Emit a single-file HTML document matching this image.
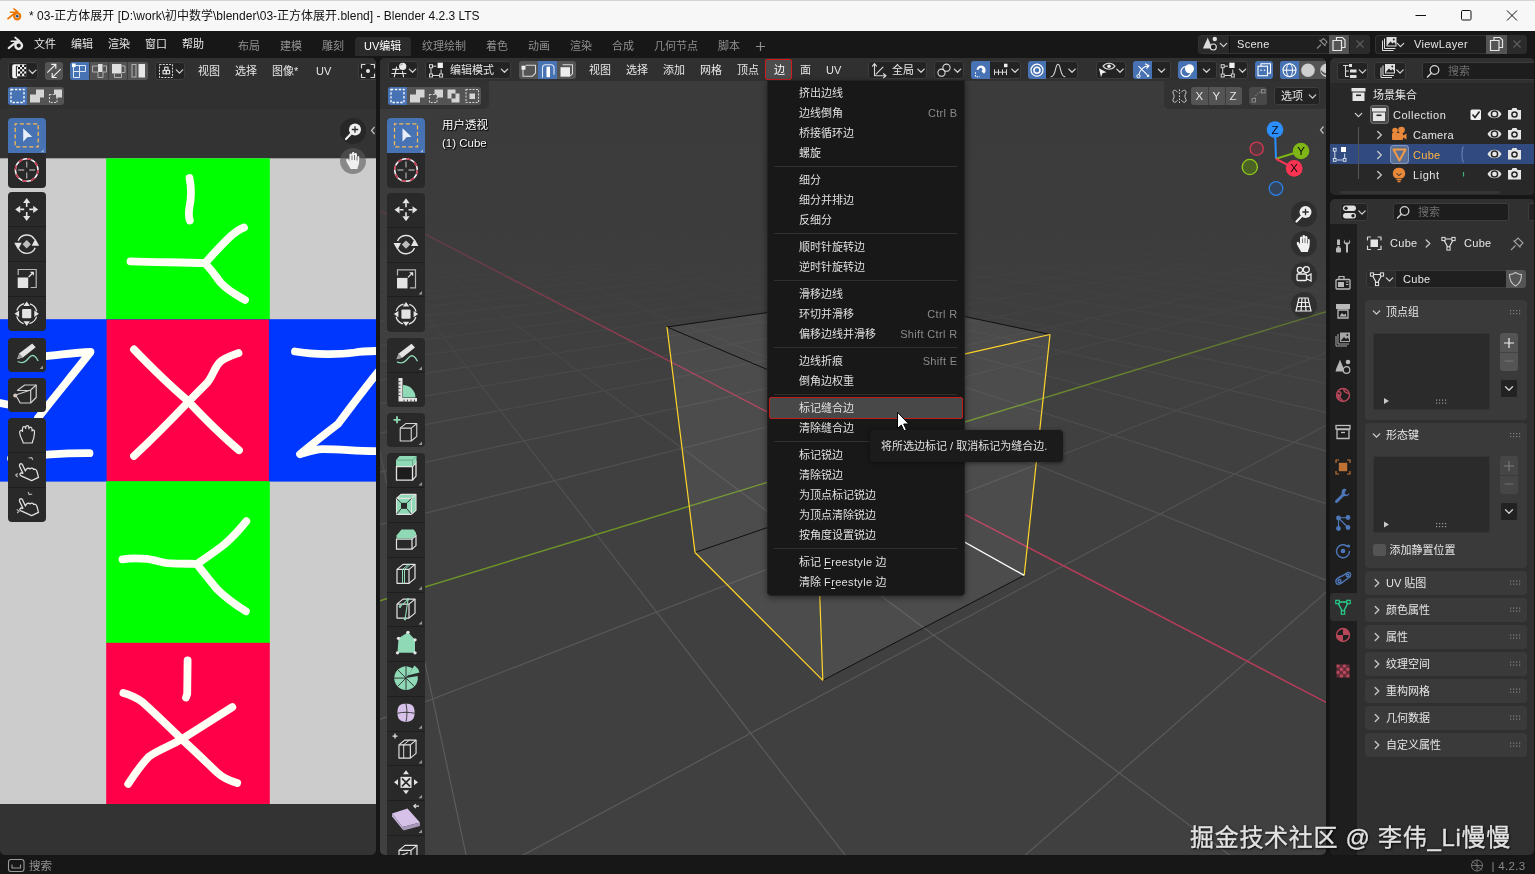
<!DOCTYPE html>
<html lang="zh">
<head>
<meta charset="utf-8">
<title>Blender</title>
<style>

*{box-sizing:border-box;margin:0;padding:0}
html,body{width:1535px;height:874px;overflow:hidden;background:#161616}
body{position:relative;will-change:transform;font-family:"Liberation Sans","Noto Sans CJK SC",sans-serif;font-size:11px;color:#e6e6e6}
.abs{position:absolute}
.t{position:absolute;white-space:nowrap;line-height:16px;height:16px}
.dim{color:#989898}
#titlebar{left:0;top:0;width:1535px;height:31px;background:#f7f7f7;box-shadow:inset 0 1px 0 #d4d4d4}
#titlebar .t{color:#111;font-size:12px}
#topbar{left:0;top:31px;width:1535px;height:27px;background:#171717}
#status{left:0;top:857px;width:1535px;height:17px;background:#171717}
.area{position:absolute;overflow:hidden}
#uv{left:0;top:58px;width:376px;height:797px;background:#333333;border-radius:4px 5px 5px 5px}
#v3d{left:380px;top:58px;width:946px;height:797px;background:linear-gradient(#3b3b3b 0,#3c3c3c 160px,#404040 330px,#404040 100%);border-radius:5px}
#outl{left:1330px;top:58px;width:204px;height:137px;background:#282828;border-radius:5px 4px 4px 5px}
#prop{left:1330px;top:199px;width:204px;height:656px;background:#303030;border-radius:5px 4px 5px 5px}
.hdr{position:absolute;left:0;top:0;width:100%;height:25px;background:#303030}
.b{position:absolute;background:#545454;border-radius:3px;height:18px;top:62px}
.b.dk{background:#232323;box-shadow:inset 0 0 0 1px #3c3c3c}
.lt{letter-spacing:0.3px}
.lt2{letter-spacing:0.35px}
u{text-underline-offset:1.5px}
.b.sel{background:#4772b3}
.area#v3d .b{top:61px}
.tool{position:absolute;width:38px;background:#292929;border-radius:4px}
.tool i{position:absolute;left:0;width:38px;height:1px;background:#1e1e1e}
svg{position:absolute;overflow:visible}
.ic{fill:none;stroke:#d8d8d8;stroke-width:1.2;stroke-linecap:round;stroke-linejoin:round}
.panel{position:absolute;left:34px;width:163px;background:#3a3a3a;border-radius:4px}
.mi{position:absolute;left:32px;white-space:nowrap;line-height:20px;height:20px;color:#e0e0e0}
.sc{position:absolute;right:7px;letter-spacing:0.35px;white-space:nowrap;line-height:20px;height:20px;color:#8a8a8a}
.sep{position:absolute;left:7px;width:183px;height:1px;background:#2f2f2f}

</style>
</head>
<body>
<div id="titlebar" class="abs"><div class="t" style="left:29px;top:8px">* 03-正方体展开 [D:\work\初中数学\blender\03-正方体展开.blend] - Blender 4.2.3 LTS</div><svg style="left:0;top:0" width="1535" height="31" viewBox="0 0 1535 31"><g transform="translate(15 15) scale(0.84)" fill="none" stroke="#ea7600" stroke-linecap="round"><path d="M-8.300 4.300L1 -3.300" stroke-width="2.200"/><path d="M-5.500 -3.200H1.500" stroke-width="1.800"/><path d="M-1.300 -7.300L3.500 -3.500" stroke-width="1.800"/><circle cx="2.600" cy="1.500" r="3.600" stroke-width="2.600" fill="#ffffff"/><circle cx="2.600" cy="1.500" r="1.700" fill="#265787" stroke="none"/></g><path d="M1415.500 15.500H1426" stroke="#111" stroke-width="1"/><rect x="1461.500" y="10.500" width="9.500" height="9.500" rx="1.200" fill="none" stroke="#111" stroke-width="1"/><path d="M1507 10.500L1517 20.500M1517 10.500L1507 20.500" stroke="#111" stroke-width="1"/></svg></div><div id="topbar" class="abs"></div><div id="status" class="abs"></div><div class="t" style="left:34px;top:35.5px;color:#e6e6e6">文件</div><div class="t" style="left:71px;top:35.5px;color:#e6e6e6">编辑</div><div class="t" style="left:108px;top:35.5px;color:#e6e6e6">渲染</div><div class="t" style="left:145px;top:35.5px;color:#e6e6e6">窗口</div><div class="t" style="left:182px;top:35.5px;color:#e6e6e6">帮助</div><div class="abs" style="left:355px;top:36.600px;width:56px;height:19px;background:#2b2b2b;border-radius:4px 4px 0 0"></div><div class="t" style="left:238px;top:38px;color:#8f8f8f">布局</div><div class="t" style="left:280px;top:38px;color:#8f8f8f">建模</div><div class="t" style="left:322px;top:38px;color:#8f8f8f">雕刻</div><div class="t" style="left:364px;top:38px;color:#ffffff">UV编辑</div><div class="t" style="left:422px;top:38px;color:#8f8f8f">纹理绘制</div><div class="t" style="left:486px;top:38px;color:#8f8f8f">着色</div><div class="t" style="left:528px;top:38px;color:#8f8f8f">动画</div><div class="t" style="left:570px;top:38px;color:#8f8f8f">渲染</div><div class="t" style="left:612px;top:38px;color:#8f8f8f">合成</div><div class="t" style="left:654px;top:38px;color:#8f8f8f">几何节点</div><div class="t" style="left:718px;top:38px;color:#8f8f8f">脚本</div><div class="abs" style="left:1198px;top:34.5px;width:172px;height:19px;border-radius:4px;background:#1f1f1f;box-shadow:inset 0 0 0 1px #333"></div><div class="abs" style="left:1199px;top:35.5px;width:30.500px;height:17px;background:#2a2a2a;border-radius:3px 0 0 3px;border-right:1px solid #111"></div><div class="abs" style="left:1376px;top:35.5px;width:30.500px;height:17px;background:#2a2a2a;border-radius:3px 0 0 3px;border-right:1px solid #111"></div><div class="abs" style="left:1328.5px;top:34.5px;width:20.500px;height:19px;background:#545454"></div><div class="abs" style="left:1349.500px;top:34.5px;width:20.500px;height:19px;background:#2b2b2b;border-radius:0 4px 4px 0"></div><div class="t lt" style="left:1237px;top:36px">Scene</div><div class="abs" style="left:1375px;top:34.5px;width:151px;height:19px;border-radius:4px;background:#1f1f1f;box-shadow:inset 0 0 0 1px #333"></div><div class="abs" style="left:1486px;top:34.5px;width:20.500px;height:19px;background:#545454"></div><div class="abs" style="left:1507px;top:34.5px;width:19.500px;height:19px;background:#2b2b2b;border-radius:0 4px 4px 0"></div><div class="t lt" style="left:1414px;top:36px">ViewLayer</div><div class="t" style="left:29px;top:858px;color:#909090;font-size:11.5px">搜索</div><div class="t" style="left:1491.500px;top:857.5px;color:#8a8a8a;font-size:11.5px;letter-spacing:0.3px">| 4.2.3</div><div class="t" style="left:1190px;top:821.5px;height:32px;line-height:32px;font-size:24px;letter-spacing:0.7px;color:#e2e2e2;-webkit-text-stroke:0.35px #e2e2e2;text-shadow:1px 1px 2px rgba(0,0,0,0.75),0 0 3px rgba(0,0,0,0.5);z-index:50">掘金技术社区 @ 李伟_Li慢慢</div><svg style="left:0;top:0;z-index:5" width="1535" height="874" viewBox="0 0 1535 874"><g transform="translate(16.3 44.2) scale(0.92)" fill="none" stroke="#e8e8e8" stroke-linecap="round"><path d="M-8.300 4.300L1 -3.300" stroke-width="2.200"/><path d="M-5.500 -3.200H1.500" stroke-width="1.800"/><path d="M-1.300 -7.300L3.500 -3.500" stroke-width="1.800"/><circle cx="2.600" cy="1.500" r="3.600" stroke-width="2.600" fill="#171717"/></g><path d="M756 46.500H765M760.500 42V51" stroke="#8f8f8f" stroke-width="1.200"/><path d="M1207.700 37.500C1209 41 1211 44.500 1212 48.500H1203C1204.500 44.500 1206.500 41 1207.700 37.500Z" fill="#dcdcdc"/><circle cx="1214.800" cy="39" r="2.200" fill="#e0e0e0"/><circle cx="1213.300" cy="47" r="3" fill="#1f1f1f" stroke="#e0e0e0" stroke-width="1.100"/><path d="M1220.3 43.4L1223.5 46.6L1226.7 43.4" fill="none" stroke="#d0d0d0" stroke-width="1.3" stroke-linecap="round" stroke-linejoin="round"/><path d="M1317 48.500L1321 44.500M1319.500 40L1325.500 46M1320.500 41L1323.500 38.500L1327 42L1324.500 45" fill="none" stroke="#8a8a8a" stroke-width="1.100"/><g transform="translate(1339 44)" fill="none" stroke="#e6e6e6" stroke-width="1.200"><path d="M-2.500 -3.500V-6.500H3.500L6 -4V3.500H2.500"/><path d="M-6 -3.500H2.500V6.500H-6Z"/></g><path d="M1356.5 40.5L1363.5 47.5M1363.5 40.5L1356.5 47.5" stroke="#5e5e5e" stroke-width="1.200"/><g transform="translate(1389.5 44)"><path d="M-7 -3.500V6.500H4M-5 -5.500V4.500H6" fill="none" stroke="#e0e0e0" stroke-width="1"/><rect x="-3" y="-7" width="10" height="9.500" fill="#e0e0e0"/><path d="M-2 1L1 -2.500L3 -0.500L4.500 -2L6 0V1.500H-2Z" fill="#222"/><circle cx="4.300" cy="-4.500" r="1" fill="#222"/></g><path d="M1397.3 43.4L1400.5 46.6L1403.7 43.4" fill="none" stroke="#d0d0d0" stroke-width="1.3" stroke-linecap="round" stroke-linejoin="round"/><g transform="translate(1496.5 44)" fill="none" stroke="#e6e6e6" stroke-width="1.200"><path d="M-2.500 -3.500V-6.500H3.500L6 -4V3.500H2.500"/><path d="M-6 -3.500H2.500V6.500H-6Z"/></g><path d="M1513.5 40.5L1520.5 47.5M1520.5 40.5L1513.5 47.5" stroke="#5e5e5e" stroke-width="1.200"/><rect x="8.500" y="859.500" width="15.500" height="12" rx="2.500" fill="none" stroke="#9a9a9a" stroke-width="1.100"/><path d="M12 864.500V868H20.500V864.500" fill="none" stroke="#9a9a9a" stroke-width="1.100"/><circle cx="1477" cy="865.500" r="5.500" fill="none" stroke="#777" stroke-width="1"/><path d="M1471.500 865.500H1482.500M1477 860V871M1472 860.500L1482 870.500" stroke="#777" stroke-width="0.900" fill="none"/></svg>
<div id="uv" class="area"><div class="abs" style="left:0;top:-58px;width:1535px;height:874px"><div class="abs" style="left:0;top:58px;width:376px;height:51px;background:#303030"></div><svg style="left:0;top:58px" width="376" height="797" viewBox="0 58 376 797"><rect x="0" y="158.3" width="376" height="645.7" fill="#cccccc"/><rect x="106.2" y="158.3" width="163.6" height="161.7" fill="#00ff00"/><rect x="0" y="319.200" width="376" height="162.400" fill="#0037ff"/><rect x="106.600" y="319.500" width="162.300" height="162" fill="#ff0048"/><rect x="106.2" y="481.2" width="163.6" height="161.8" fill="#00ff00"/><rect x="106.2" y="642.8" width="163.6" height="161.2" fill="#ff0048"/><g fill="none" stroke="#fffff6" stroke-width="7.8" stroke-linecap="round" stroke-linejoin="round"><path d="M189.5 178 C192 190 191 200 189.3 208 C188.5 214 189 218 189.8 220.5"/><path d="M130.5 261.4 C160 262.5 185 262 205 263.2"/><path d="M205 263.2 C215 252 224 242 232 235 C237 231 240 229 244 227.5"/><path d="M205 263.5 C212 270 216 277 221 283 C228 291 237 295 245 300"/><path d="M134 349.5 C150 366 168 384 187.5 400.5 C205 419 222 436 239 450.2"/><path d="M238.5 353 C230 356 224 358 220 362 C214 368 213 376 207 383 C199 391 193 397 187.6 402.6 C170 421 150 441 134 456"/><path d="M42 356.5 C60 355 75 352.5 90.5 352 C75 372 55 396 38 418"/><path d="M0 403 L9 404.8"/><path d="M11 458.5 C30 456 60 453 89.5 453.2"/><path d="M295 351.5 C315 355 340 354.5 355 352.5 C362 351 370 351 378 351"/><path d="M378 372 C365 388 350 408 338 424 C325 434 312 444 300 454.2 C308 452 315 449.5 322 449.2 C340 449 360 451.5 378 451"/><path d="M122.5 559.3 C130 558 140 558.2 147 558.8 C155 560 162 562.5 168 563.2 C178 564 188 563.6 197.3 563.8"/><path d="M197.3 563.8 C207 557 216 551 224.5 544.2 C233 537 240 529 246.3 521.2"/><path d="M197.5 565 C204 573 210 581 216.8 588.9 C226 598 236 605 245.9 611.3"/><path d="M187.6 660.4 L187.2 694 L186 697.6"/><path d="M123.4 693 C131 695 137 698 142.8 702.3 C156 714 169 727 181.7 739.2 C194 750 205 761 216.8 772.3 C223 778 230 781 237.2 783"/><path d="M232.3 707.1 C215 718 198 729 181.7 739.2 C170 746 158 750 148.6 756.8 C141 765 134 775 128.2 784"/></g></svg><div class="b dk" style="left:8px;width:30px"></div><div class="b" style="left:45px;width:18px"></div><div class="b" style="left:70px;width:78px"></div><div class="b sel" style="left:70px;width:19px;border-radius:3px 0 0 3px"></div><div class="abs" style="left:89px;top:62px;width:1px;height:18px;background:#3d3d3d"></div><div class="abs" style="left:108px;top:62px;width:1px;height:18px;background:#3d3d3d"></div><div class="abs" style="left:127px;top:62px;width:1px;height:18px;background:#3d3d3d"></div><div class="b dk" style="left:155px;width:30px"></div><div class="b dk" style="left:357.500px;width:24px;top:62.500px;height:17px"></div><div class="t" style="left:198px;top:63px">视图</div><div class="t" style="left:235px;top:63px">选择</div><div class="t" style="left:272px;top:63px">图像*</div><div class="t" style="left:316px;top:63px">UV</div><div class="b" style="left:8px;top:87px;width:56px;height:18px"></div><div class="b sel" style="left:8px;top:87px;width:19px;height:18px;border-radius:3px 0 0 3px"></div><div class="tool" style="left:7.5px;top:118px;height:69.5px"><i style="top:34.25px"></i><div class="abs" style="left:0;top:0.0px;width:38px;height:34.75px;background:#4772b3;border-radius:4px 4px 0 0"></div></div><div class="tool" style="left:7.5px;top:192px;height:139.0px"><i style="top:34.25px"></i><i style="top:69.0px"></i><i style="top:103.75px"></i></div><div class="tool" style="left:7.5px;top:337.5px;height:34.75px"></div><div class="tool" style="left:7.5px;top:377.5px;height:34.75px"></div><div class="tool" style="left:7.5px;top:417.5px;height:104.25px"><i style="top:34.25px"></i><i style="top:69.0px"></i></div><div class="abs" style="left:340px;top:118px;width:26px;height:26px;border-radius:13px;background:rgba(28,28,28,0.5)"></div><div class="abs" style="left:340px;top:148px;width:26px;height:26px;border-radius:13px;background:rgba(90,90,90,0.6)"></div><svg style="left:0;top:0" width="1535" height="874" viewBox="0 0 1535 874"><g transform="translate(26.7 135.3)" ><rect x="-11.5" y="-11.5" width="23" height="23" fill="none" stroke="#f5b955" stroke-width="1.3" stroke-dasharray="4.2 2.4" stroke-dashoffset="2"/><path d="M-3.5 -7 L5.5 1.5 L0.5 2 L-3.5 6.5Z" fill="#e8eef8"/><path d="M17 14 L17 17 L14 17Z" fill="#9db5da"/></g><g transform="translate(26.7 170)" ><circle r="11.3" fill="none" stroke="#f2f2f2" stroke-width="1.5"/><circle r="11.3" fill="none" stroke="#c8324a" stroke-width="1.5" stroke-dasharray="4.4 4.47"/><path d="M-8.5 0H-2.5M2.5 0H8.5M0 -8.5V-2.5M0 2.5V8.5" stroke="#9a9a9a" stroke-width="1.4" fill="none"/></g><g transform="translate(26.7 209.4)" ><path d="M11.5 0.0L6.5 3.6L6.5 -3.6ZM-11.5 0.0L-6.5 -3.6L-6.5 3.6ZM0.0 11.5L-3.6 6.5L3.6 6.5ZM0.0 -11.5L3.6 -6.5L-3.6 -6.5Z" fill="#e4e4e4"/><path d="M-6.5 0H-2.5M2.5 0H6.5M0 -6.5V-2.5M0 2.5V6.5" stroke="#e4e4e4" stroke-width="1.6" fill="none"/></g><g transform="translate(26.7 244.2)" ><path d="M-8.5 -3.5A9.2 9.2 0 0 1 8 -4.5M8.5 3.5A9.2 9.2 0 0 1 -8 4.5" fill="none" stroke="#e4e4e4" stroke-width="1.4"/><path d="M8.6 -5.5L12.5 1.5L5 1.5ZM-8.6 5.5L-12.5 -1.5L-5 -1.5Z" fill="#e4e4e4"/><path d="M0 -4.2L4.2 0L0 4.2L-4.2 0Z" fill="#bdbdbd"/></g><g transform="translate(26.7 279)" ><rect x="-9" y="-1.5" width="10.5" height="10.5" fill="#e4e4e4"/><path d="M-8.5 -4V-9.5H9.5V8.5H4" fill="none" stroke="#b8b8b8" stroke-width="1.2"/><path d="M2 -2L6.5 -6.5" stroke="#e4e4e4" stroke-width="1.3"/><path d="M3.2 -7.2H7.2V-3.2Z" fill="#e4e4e4"/></g><g transform="translate(26.7 313.7)" ><circle r="10.3" fill="none" stroke="#e4e4e4" stroke-width="1.3" stroke-dasharray="10.2 6" stroke-dashoffset="-3"/><rect x="-4.6" y="-4.6" width="9.2" height="9.2" rx="1" fill="#e4e4e4"/><path d="M12.2 0.0L7.6 3.2L7.6 -3.2ZM-12.2 0.0L-7.6 -3.2L-7.6 3.2ZM0.0 12.2L-3.2 7.6L3.2 7.6ZM0.0 -12.2L3.2 -7.6L-3.2 -7.6Z" fill="#e4e4e4"/></g><g transform="translate(26.7 354.5)" ><path d="M-9.5 4.5L-7.3 -1.2L5.5 -11L9 -7.2L-3.8 3Z" fill="#e4e4e4"/><path d="M-9.5 4.5L-7.3 -1.2L-3.8 3Z" fill="#9a9a9a"/><path d="M-9 7C-3 10 0 6 3 2.5C6 -0.5 9 1 11.5 6.5" fill="none" stroke="#8fd9b6" stroke-width="1.3"/></g><path d="M43 365.5V369H39.5Z" fill="#9a9a9a"/><g transform="translate(26.7 394.5)" ><path d="M-9.5 -4L-2 -9.5H9.5V3L4 8.5H-6.5L-11 0.5" fill="none" stroke="#cfcfcf" stroke-width="1.2" stroke-linejoin="round"/><path d="M-11 0.5L4 -4.5V8.5M4 -4.5L9.5 -9.5M-9.5 -4H4" fill="none" stroke="#cfcfcf" stroke-width="1.2" stroke-linejoin="round"/><circle cx="-11.5" cy="1" r="2" fill="#d8c8c0"/></g><g transform="translate(26.7 434.5)" ><path d="M-7 -1.5C-7.5 -4 -5 -5 -4.2 -3V-6C-4 -8.5 -1.2 -8.5 -1 -6V-7C-0.8 -9.5 2 -9.5 2.2 -7V-5.8C2.5 -8 5.2 -8 5.3 -5.5V-3.5C6 -5 8 -4.5 7.8 -2.5C7.5 1 7.5 4 6 6.5C5.5 8.5 5.5 8.5 5.5 8.5H-3.5C-3.5 6 -6.5 3 -7 -1.5Z" fill="none" stroke="#e0e0e0" stroke-width="1.2" stroke-linejoin="round"/></g><g transform="translate(26.7 469.5)" ><path d="M-3 -4.5C-3 -7 0 -7 0 -4.5V1.5C2 -0.5 4 0 4.5 1.5C6.5 1 7.5 2 7.5 3.5C9 3.5 9.8 4.5 9.5 6.5L8.5 12H1.5L-5.5 4C-7 2 -5 0.5 -3 2.5Z" fill="none" stroke="#e0e0e0" stroke-width="1.2" stroke-linejoin="round" transform="translate(-2 0) rotate(-25) scale(1.08)"/><path d="M-9 4L-11 5.5L-9 7.5M2 -11.5L5 -12L6 -9.5" fill="none" stroke="#bdbdbd" stroke-width="1.1"/></g><g transform="translate(26.7 504.5)" ><path d="M-3 -4.5C-3 -7 0 -7 0 -4.5V1.5C2 -0.5 4 0 4.5 1.5C6.5 1 7.5 2 7.5 3.5C9 3.5 9.8 4.5 9.5 6.5L8.5 12H1.5L-5.5 4C-7 2 -5 0.5 -3 2.5Z" fill="none" stroke="#e0e0e0" stroke-width="1.2" stroke-linejoin="round" transform="translate(-2 0) rotate(-25) scale(1.08)"/><path d="M-10 5L-7.5 6.5L-9.5 8.5M1.5 -12.5L2.5 -9.8L5.5 -10.5" fill="none" stroke="#bdbdbd" stroke-width="1.1"/></g><path d="M12.200 66.200A2 2 0 0 1 14.200 64.200H26.200V76.200H17.200V78.200H14.200A2 2 0 0 1 12.200 76.200Z" fill="#f2f2f2"/><path d="M16.400 66.300V76.500" stroke="#232323" stroke-width="1"/><path d="M16 66.300H18" stroke="#232323" stroke-width="0.800"/><rect x="20.05" y="64.80" width="2.050" height="2.200" fill="#111"/><rect x="24.15" y="64.80" width="2.050" height="2.200" fill="#111"/><rect x="18.00" y="67.00" width="2.050" height="2.200" fill="#111"/><rect x="22.10" y="67.00" width="2.050" height="2.200" fill="#111"/><rect x="20.05" y="69.20" width="2.050" height="2.200" fill="#111"/><rect x="24.15" y="69.20" width="2.050" height="2.200" fill="#111"/><rect x="18.00" y="71.40" width="2.050" height="2.200" fill="#111"/><rect x="22.10" y="71.40" width="2.050" height="2.200" fill="#111"/><rect x="20.05" y="73.60" width="2.050" height="2.200" fill="#111"/><rect x="24.15" y="73.60" width="2.050" height="2.200" fill="#111"/><path d="M29.1 70.1L32.5 73.5L35.9 70.1" fill="none" stroke="#d0d0d0" stroke-width="1.3" stroke-linecap="round" stroke-linejoin="round"/><path d="M47.300 72.700L55.500 64.600M51.300 64.300H55.800V68.800M60.700 69.200L52.400 77.300M52.200 73V77.500H56.700" fill="none" stroke="#f0f0f0" stroke-width="1.150"/><rect x="72" y="63.5" width="3.6" height="3.6" fill="#fff"/><path d="M75.5 65.5H85.5V71.5H79.5V77.5H73.5V67M79.5 65.5V71.5H73.5" class="ic" style="stroke:#dfe8f5;stroke-width:1"/><rect x="98" y="64" width="4.5" height="8" fill="#e0e0e0"/><path d="M98 66H92.5V72H98V77.5H103V72M103 66H106.5V72H103" class="ic" style="stroke:#b0b0b0;stroke-width:1"/><rect x="112" y="64" width="9.5" height="9.5" fill="#e0e0e0"/><path d="M122 66H125V72.5H122M114.5 74V77.5H121.5V74" class="ic" style="stroke:#b0b0b0;stroke-width:1"/><rect x="138.5" y="64" width="6.5" height="13.5" fill="#e6e6e6"/><rect x="132" y="64.5" width="4" height="12.5" fill="none" stroke="#b0b0b0" stroke-width="1"/><rect x="159.5" y="64.5" width="13" height="13" fill="none" stroke="#d8d8d8" stroke-width="1" stroke-dasharray="2 1.2"/><rect x="163" y="70.5" width="3.3" height="3.3" fill="none" stroke="#e8e8e8" stroke-width="1.1"/><rect x="166.3" y="70.5" width="3.3" height="3.3" fill="none" stroke="#e8e8e8" stroke-width="1.1"/><rect x="164.7" y="67.2" width="3.3" height="3.3" fill="none" stroke="#e8e8e8" stroke-width="1.1"/><path d="M176.3 69.9L179.5 73.1L182.7 69.9" fill="none" stroke="#d0d0d0" stroke-width="1.3" stroke-linecap="round" stroke-linejoin="round"/><path d="M361.500 68V64.500H365M371 64.500H374.500V68M361.500 74V77.500H365M371 77.500H374.500V74" class="ic"/><circle cx="368" cy="71" r="2" fill="#e8e8e8"/><rect x="11" y="89.5" width="13" height="13" fill="none" stroke="#fff" stroke-width="1.3" stroke-dasharray="2.4 1.5"/><path d="M36 89.5H44V97.5H40V102.5H30V94.5H36Z" fill="#d4d4d4"/><path d="M54 89.5H62V97.5H56V94.5H54Z" fill="#d4d4d4"/><rect x="49.5" y="94.5" width="7.5" height="8" fill="none" stroke="#d0d0d0" stroke-width="1.1" stroke-dasharray="2 1.3"/><circle cx="355" cy="129.500" r="6" fill="#f0f0f0"/><path d="M350.800 134L346 139" stroke="#f0f0f0" stroke-width="2.200" stroke-linecap="round"/><path d="M351.800 129.500H358.200M355 126.300V132.700" stroke="#2a2a2a" stroke-width="1.300"/><g transform="translate(353 161)"><path d="M-6.5 0.5C-7.5 -2 -5.5 -3 -4.5 -1.5L-3.5 0.5V-6C-3.5 -8 -1 -8 -1 -6V-7.5C-1 -9.5 1.5 -9.5 1.5 -7.5V-6.5C1.8 -8.5 4 -8.3 4 -6.3V-4C4.5 -5.5 6.5 -5.3 6.3 -3.3C6.2 0.5 6.3 3.5 4.8 6C4.5 7.5 4.5 8 4.5 8H-2.5C-3 5.5 -5.5 3.5 -6.5 0.5Z" fill="#f0f0f0"/><path d="M-1 -5.5V-1M1.5 -6V-1M4 -4.5V-0.5" stroke="#555" stroke-width="0.8"/></g><path d="M374.5 127L371.5 130.5L374.5 134" fill="none" stroke="#c0c0c0" stroke-width="1.2"/></svg></div></div>
<div id="v3d" class="area"><div class="abs" style="left:-380px;top:-58px;width:1535px;height:874px"><svg style="left:380px;top:58px" width="946" height="797" viewBox="380 58 946 797"><defs><linearGradient id="gf" x1="0" y1="0" x2="0" y2="1" gradientUnits="userSpaceOnUse" ></linearGradient><linearGradient id="fade" gradientUnits="userSpaceOnUse" x1="0" y1="220" x2="0" y2="720"><stop offset="0.000" stop-color="#000000"/><stop offset="0.160" stop-color="#212121"/><stop offset="0.320" stop-color="#545454"/><stop offset="0.480" stop-color="#949494"/><stop offset="0.680" stop-color="#d1d1d1"/><stop offset="1.000" stop-color="#ffffff"/></linearGradient><linearGradient id="fade2" gradientUnits="userSpaceOnUse" x1="0" y1="190" x2="0" y2="430"><stop offset="0.000" stop-color="#333333"/><stop offset="0.292" stop-color="#616161"/><stop offset="0.625" stop-color="#adadad"/><stop offset="1.000" stop-color="#ffffff"/></linearGradient><mask id="gm2" maskUnits="userSpaceOnUse" x="370" y="50" width="970" height="820"><rect x="370" y="50" width="970" height="820" fill="url(#fade2)"/></mask><mask id="gm" maskUnits="userSpaceOnUse" x="370" y="50" width="970" height="820"><rect x="370" y="50" width="970" height="820" fill="url(#fade)"/></mask></defs><g mask="url(#gm)"><g stroke="#5c5c5c" stroke-width="1.15" fill="none"><path d="M370.0 209.7L950.8 190.2"/><path d="M370.0 210.2L956.5 190.2"/><path d="M370.0 210.6L962.3 190.3"/><path d="M370.0 211.1L968.2 190.4"/><path d="M370.0 211.7L974.2 190.5"/><path d="M370.0 212.2L980.4 190.6"/><path d="M370.0 212.7L986.6 190.7"/><path d="M370.0 213.3L993.0 190.8"/><path d="M370.0 213.9L999.5 190.9"/><path d="M370.0 214.5L1006.1 191.0"/><path d="M370.0 215.2L1012.9 191.1"/><path d="M370.0 215.8L1019.8 191.2"/><path d="M370.0 216.5L1026.8 191.3"/><path d="M370.0 217.2L1034.0 191.4"/><path d="M370.0 217.9L1041.3 191.6"/><path d="M370.0 218.7L1048.8 191.7"/><path d="M370.0 219.5L1056.4 191.8"/><path d="M370.0 220.3L1064.2 191.9"/><path d="M370.0 221.2L1072.2 192.0"/><path d="M370.0 222.1L1080.3 192.2"/><path d="M370.0 223.1L1088.6 192.3"/><path d="M370.0 224.1L1097.1 192.4"/><path d="M370.0 225.1L1105.8 192.5"/><path d="M370.0 226.2L1114.7 192.7"/><path d="M370.0 227.3L1123.8 192.8"/><path d="M370.0 228.5L1133.1 193.0"/><path d="M370.0 229.8L1142.6 193.1"/><path d="M370.0 231.1L1152.3 193.3"/><path d="M370.0 232.5L1162.3 193.4"/><path d="M370.0 234.0L1172.5 193.6"/><path d="M370.0 235.6L1183.0 193.7"/><path d="M370.0 237.3L1193.7 193.9"/><path d="M370.0 239.0L1204.7 194.1"/><path d="M370.0 240.9L1216.0 194.2"/><path d="M370.0 242.9L1227.6 194.4"/><path d="M370.0 245.0L1239.5 194.6"/><path d="M370.0 247.3L1251.6 194.8"/><path d="M370.0 249.8L1264.2 195.0"/><path d="M370.0 252.4L1277.0 195.2"/><path d="M370.0 255.2L1290.3 195.4"/><path d="M370.0 258.3L1303.8 195.6"/><path d="M370.0 261.6L1317.8 195.8"/><path d="M370.0 265.3L1332.2 196.0"/><path d="M370.0 269.2L1336.0 197.1"/><path d="M370.0 273.6L1336.0 198.5"/><path d="M370.0 278.4L1336.0 200.1"/><path d="M370.0 283.7L1336.0 201.9"/><path d="M370.0 289.6L1336.0 203.9"/><path d="M370.0 296.3L1336.0 206.1"/><path d="M370.0 303.7L1336.0 208.6"/><path d="M370.0 312.3L1336.0 211.4"/><path d="M370.0 322.0L1336.0 214.7"/><path d="M370.0 333.4L1336.0 218.5"/><path d="M370.0 346.7L1336.0 222.9"/><path d="M370.0 362.5L1336.0 228.2"/><path d="M370.0 381.6L1336.0 234.6"/><path d="M370.0 405.3L1336.0 242.5"/><path d="M370.0 435.1L1336.0 252.5"/><path d="M370.0 405.5L468.2 865.0"/><path d="M370.0 474.2L1336.0 265.5"/><path d="M370.0 242.5L852.8 865.0"/><path d="M370.0 527.2L1336.0 283.2"/><path d="M370.0 216.2L1243.1 865.0"/><path d="M370.0 723.3L1336.0 348.6"/><path d="M393.3 208.9L1336.0 584.2"/><path d="M504.5 865.0L1336.0 419.9"/><path d="M408.7 208.4L1336.0 506.8"/><path d="M1013.9 865.0L1336.0 583.6"/><path d="M423.7 207.9L1336.0 453.6"/><path d="M438.4 207.4L1336.0 414.8"/><path d="M452.8 206.9L1336.0 385.3"/><path d="M466.9 206.4L1336.0 362.1"/><path d="M480.7 206.0L1336.0 343.3"/><path d="M494.2 205.5L1336.0 327.8"/><path d="M507.5 205.1L1336.0 314.9"/><path d="M520.5 204.6L1336.0 303.8"/><path d="M533.2 204.2L1336.0 294.3"/><path d="M545.7 203.8L1336.0 286.1"/><path d="M558.0 203.4L1336.0 278.8"/><path d="M570.0 203.0L1336.0 272.4"/><path d="M581.8 202.6L1336.0 266.7"/><path d="M593.3 202.2L1336.0 261.6"/><path d="M604.7 201.8L1336.0 256.9"/><path d="M615.8 201.4L1336.0 252.7"/><path d="M626.8 201.0L1336.0 248.9"/><path d="M637.5 200.7L1336.0 245.4"/><path d="M648.1 200.3L1336.0 242.2"/><path d="M658.5 200.0L1336.0 239.3"/><path d="M668.7 199.6L1336.0 236.5"/><path d="M678.7 199.3L1336.0 234.0"/><path d="M688.5 199.0L1336.0 231.7"/><path d="M698.2 198.6L1336.0 229.5"/><path d="M707.7 198.3L1336.0 227.4"/><path d="M717.0 198.0L1336.0 225.5"/><path d="M726.2 197.7L1336.0 223.7"/><path d="M735.3 197.4L1336.0 222.0"/><path d="M744.2 197.1L1336.0 220.4"/><path d="M752.9 196.8L1336.0 218.9"/><path d="M761.5 196.5L1336.0 217.5"/><path d="M770.0 196.2L1336.0 216.2"/><path d="M778.3 196.0L1336.0 214.9"/><path d="M786.5 195.7L1336.0 213.7"/><path d="M794.6 195.4L1336.0 212.5"/><path d="M802.5 195.1L1336.0 211.4"/><path d="M810.4 194.9L1336.0 210.4"/><path d="M818.1 194.6L1336.0 209.4"/><path d="M825.7 194.4L1336.0 208.4"/><path d="M833.1 194.1L1336.0 207.5"/><path d="M840.5 193.9L1336.0 206.7"/><path d="M847.8 193.6L1336.0 205.8"/><path d="M854.9 193.4L1336.0 205.0"/><path d="M862.0 193.1L1336.0 204.3"/><path d="M868.9 192.9L1336.0 203.5"/><path d="M875.7 192.7L1336.0 202.8"/><path d="M882.5 192.5L1336.0 202.1"/><path d="M889.1 192.2L1336.0 201.5"/><path d="M895.7 192.0L1336.0 200.9"/><path d="M902.2 191.8L1336.0 200.3"/><path d="M908.5 191.6L1336.0 199.7"/><path d="M914.8 191.4L1336.0 199.1"/><path d="M921.0 191.2L1336.0 198.6"/><path d="M927.1 191.0L1336.0 198.0"/><path d="M933.2 190.8L1336.0 197.5"/><path d="M939.1 190.6L1336.0 197.0"/><path d="M945.0 190.4L1336.0 196.6"/><path d="M950.8 190.2L1336.0 196.1"/></g></g><g mask="url(#gm2)"><path d="M377.6 209.4L1336.0 707.4" stroke="#b63c5a" stroke-width="1.4"/><path d="M370.0 603.7L1336.0 308.7" stroke="#6f9428" stroke-width="1.4"/></g><path d="M667.0 327.0L812.3 388.6L1050.0 334.5L873.5 297.3Z" fill="#ffffff" fill-opacity="0.035"/><path d="M695.0 552.5L822.8 680.4L1024.2 575.4L873.4 491.0Z" fill="#ffffff" fill-opacity="0.035"/><path d="M667.0 327.0L812.3 388.6L822.8 680.4L695.0 552.5Z" fill="#ffffff" fill-opacity="0.035"/><path d="M873.5 297.3L1050.0 334.5L1024.2 575.4L873.4 491.0Z" fill="#ffffff" fill-opacity="0.035"/><path d="M667.0 327.0L873.5 297.3L873.4 491.0L695.0 552.5Z" fill="#ffffff" fill-opacity="0.035"/><path d="M812.3 388.6L1050.0 334.5L1024.2 575.4L822.8 680.4Z" fill="#ffffff" fill-opacity="0.035"/><path d="M667.0 327.0L812.3 388.6" stroke="#101010" stroke-width="1.0" fill="none"/><path d="M667.0 327.0L873.5 297.3" stroke="#101010" stroke-width="1.0" fill="none"/><path d="M1050.0 334.5L873.5 297.3" stroke="#101010" stroke-width="1.0" fill="none"/><path d="M873.5 297.3L873.4 491.0" stroke="#101010" stroke-width="1.0" fill="none"/><path d="M695.0 552.5L873.4 491.0" stroke="#101010" stroke-width="1.0" fill="none"/><path d="M822.8 680.4L1024.2 575.4" stroke="#101010" stroke-width="1.0" fill="none"/><path d="M667.0 327.0L695.0 552.5" stroke="#ffd52b" stroke-width="1.2" fill="none"/><path d="M695.0 552.5L822.8 680.4" stroke="#ffd52b" stroke-width="1.2" fill="none"/><path d="M822.8 680.4L812.3 388.6" stroke="#ffd52b" stroke-width="1.2" fill="none"/><path d="M812.3 388.6L1050.0 334.5" stroke="#ffd52b" stroke-width="1.2" fill="none"/><path d="M1050.0 334.5L1024.2 575.4" stroke="#ffd52b" stroke-width="1.2" fill="none"/><path d="M1024.2 575.4L873.4 491.0" stroke="#ffffff" stroke-width="1.3" fill="none"/></svg><div class="abs" style="left:380px;top:58px;width:946px;height:22.500px;background:#303030"></div><div class="abs" style="left:380px;top:80.5px;width:108.500px;height:28px;background:#323232;border-radius:0 0 5px 0"></div><div class="abs" style="left:1164px;top:80.5px;width:162px;height:28px;background:#323232;border-radius:0 0 0 5px"></div><div class="b dk" style="left:388px;width:30px"></div><div class="b dk" style="left:425px;width:86px"></div><div class="t" style="left:450px;top:61.5px">编辑模式</div><div class="b" style="left:519px;width:57px"></div><div class="b sel" style="left:538px;width:19px;border-radius:0"></div><div class="t" style="left:589px;top:61.5px">视图</div><div class="t" style="left:626px;top:61.5px">选择</div><div class="t" style="left:663px;top:61.5px">添加</div><div class="t" style="left:700px;top:61.5px">网格</div><div class="t" style="left:737px;top:61.5px">顶点</div><div class="t" style="left:800px;top:61.5px">面</div><div class="t" style="left:826px;top:61.5px">UV</div><div class="abs" style="left:764.500px;top:58.8px;width:27.500px;height:21.200px;background:#4d4d4d;border:1.5px solid #d01c1c;border-radius:2px"></div><div class="t" style="left:774px;top:61.5px;color:#fff">边</div><div class="b dk" style="left:868px;width:59px"></div><div class="t" style="left:892px;top:61.5px">全局</div><div class="b dk" style="left:934px;width:30px"></div><div class="b dk" style="left:971px;width:50px"></div><div class="b sel" style="left:971px;width:19px;border-radius:3px 0 0 3px"></div><div class="b dk" style="left:1028px;width:50px"></div><div class="b sel" style="left:1028px;width:18px;border-radius:3px 0 0 3px"></div><div class="b dk" style="left:1096px;width:30px"></div><div class="b dk" style="left:1133px;width:38px"></div><div class="b sel" style="left:1133px;width:19px;border-radius:3px 0 0 3px"></div><div class="b dk" style="left:1178px;width:39px"></div><div class="b sel" style="left:1178px;width:19px;border-radius:3px 0 0 3px"></div><div class="b dk" style="left:1219px;width:29px"></div><div class="b sel" style="left:1255px;width:18px"></div><div class="b" style="left:1280px;width:60px"></div><div class="b sel" style="left:1280px;width:19px;border-radius:3px 0 0 3px"></div><div class="b" style="left:388px;top:87px;width:93px;height:18px"></div><div class="b sel" style="left:388px;top:87px;width:19px;height:18px;border-radius:3px 0 0 3px"></div><div class="b" style="left:1191px;top:87px;width:51px;height:18px"></div><div class="t" style="left:1195.5px;top:88px;font-size:11.5px">X</div><div class="t" style="left:1212.5px;top:88px;font-size:11.5px">Y</div><div class="t" style="left:1229.5px;top:88px;font-size:11.5px">Z</div><div class="abs" style="left:1208px;top:87px;width:1px;height:18px;background:#3d3d3d"></div><div class="abs" style="left:1225px;top:87px;width:1px;height:18px;background:#3d3d3d"></div><div class="b" style="left:1249px;top:87px;width:18px;height:18px;background:#484848"></div><div class="b dk" style="left:1274px;top:87px;width:46px;height:18px"></div><div class="t" style="left:1281px;top:88px">选项</div><div class="t" style="left:442px;top:117px;color:#fff;font-size:11.5px;text-shadow:0 0 2px #000,1px 1px 1px #000">用户透视</div><div class="t" style="left:442px;top:135px;color:#fff;font-size:11.5px;text-shadow:0 0 2px #000,1px 1px 1px #000">(1) Cube</div><div class="tool" style="left:387px;top:118px;height:69.5px"><i style="top:34.25px"></i><div class="abs" style="left:0;top:0.0px;width:38px;height:34.75px;background:#4772b3;border-radius:4px 4px 0 0"></div></div><div class="tool" style="left:387px;top:192.5px;height:139.0px"><i style="top:34.25px"></i><i style="top:69.0px"></i><i style="top:103.75px"></i></div><div class="tool" style="left:387px;top:337.5px;height:69.5px"><i style="top:34.25px"></i></div><div class="tool" style="left:387px;top:412.5px;height:34.75px"></div><div class="tool" style="left:387px;top:453px;height:417.0px"><i style="top:34.25px"></i><i style="top:69.0px"></i><i style="top:103.75px"></i><i style="top:138.5px"></i><i style="top:173.25px"></i><i style="top:208.0px"></i><i style="top:242.75px"></i><i style="top:277.5px"></i><i style="top:312.25px"></i><i style="top:347.0px"></i><i style="top:381.75px"></i></div><div class="abs" style="left:1290.5px;top:201px;width:26px;height:26px;border-radius:13px;background:rgba(28,28,28,0.42)"></div><div class="abs" style="left:1290.5px;top:231px;width:26px;height:26px;border-radius:13px;background:rgba(28,28,28,0.42)"></div><div class="abs" style="left:1290.5px;top:261.5px;width:26px;height:26px;border-radius:13px;background:rgba(28,28,28,0.42)"></div><div class="abs" style="left:1290.5px;top:291.5px;width:26px;height:26px;border-radius:13px;background:rgba(28,28,28,0.42)"></div><svg style="left:0;top:0" width="1535" height="874" viewBox="0 0 1535 874"><g transform="translate(406 135.3)" ><rect x="-11.5" y="-11.5" width="23" height="23" fill="none" stroke="#f5b955" stroke-width="1.3" stroke-dasharray="4.2 2.4" stroke-dashoffset="2"/><path d="M-3.5 -7 L5.5 1.5 L0.5 2 L-3.5 6.5Z" fill="#e8eef8"/><path d="M17 14 L17 17 L14 17Z" fill="#9db5da"/></g><g transform="translate(406 170)" ><circle r="11.3" fill="none" stroke="#f2f2f2" stroke-width="1.5"/><circle r="11.3" fill="none" stroke="#c8324a" stroke-width="1.5" stroke-dasharray="4.4 4.47"/><path d="M-8.5 0H-2.5M2.5 0H8.5M0 -8.5V-2.5M0 2.5V8.5" stroke="#9a9a9a" stroke-width="1.4" fill="none"/></g><g transform="translate(406 209.8)" ><path d="M11.5 0.0L6.5 3.6L6.5 -3.6ZM-11.5 0.0L-6.5 -3.6L-6.5 3.6ZM0.0 11.5L-3.6 6.5L3.6 6.5ZM0.0 -11.5L3.6 -6.5L-3.6 -6.5Z" fill="#e4e4e4"/><path d="M-6.5 0H-2.5M2.5 0H6.5M0 -6.5V-2.5M0 2.5V6.5" stroke="#e4e4e4" stroke-width="1.6" fill="none"/></g><g transform="translate(406 244.6)" ><path d="M-8.5 -3.5A9.2 9.2 0 0 1 8 -4.5M8.5 3.5A9.2 9.2 0 0 1 -8 4.5" fill="none" stroke="#e4e4e4" stroke-width="1.4"/><path d="M8.6 -5.5L12.5 1.5L5 1.5ZM-8.6 5.5L-12.5 -1.5L-5 -1.5Z" fill="#e4e4e4"/><path d="M0 -4.2L4.2 0L0 4.2L-4.2 0Z" fill="#bdbdbd"/></g><g transform="translate(406 279.4)" ><rect x="-9" y="-1.5" width="10.5" height="10.5" fill="#e4e4e4"/><path d="M-8.5 -4V-9.5H9.5V8.5H4" fill="none" stroke="#b8b8b8" stroke-width="1.2"/><path d="M2 -2L6.5 -6.5" stroke="#e4e4e4" stroke-width="1.3"/><path d="M3.2 -7.2H7.2V-3.2Z" fill="#e4e4e4"/></g><path d="M422 291.0V294.5H418.5Z" fill="#9a9a9a"/><g transform="translate(406 314.1)" ><circle r="10.3" fill="none" stroke="#e4e4e4" stroke-width="1.3" stroke-dasharray="10.2 6" stroke-dashoffset="-3"/><rect x="-4.6" y="-4.6" width="9.2" height="9.2" rx="1" fill="#e4e4e4"/><path d="M12.2 0.0L7.6 3.2L7.6 -3.2ZM-12.2 0.0L-7.6 -3.2L-7.6 3.2ZM0.0 12.2L-3.2 7.6L3.2 7.6ZM0.0 -12.2L3.2 -7.6L-3.2 -7.6Z" fill="#e4e4e4"/></g><g transform="translate(406 354.8)" ><path d="M-9.5 4.5L-7.3 -1.2L5.5 -11L9 -7.2L-3.8 3Z" fill="#e4e4e4"/><path d="M-9.5 4.5L-7.3 -1.2L-3.8 3Z" fill="#9a9a9a"/><path d="M-9 7C-3 10 0 6 3 2.5C6 -0.5 9 1 11.5 6.5" fill="none" stroke="#8fd9b6" stroke-width="1.3"/></g><path d="M422 366.5V370H418.5Z" fill="#9a9a9a"/><g transform="translate(406 389.6)" ><path d="M-7.5 -11.5H-3.5V8.5H11V12H-7.5Z" fill="#e4e4e4"/><path d="M-3 8V-4.5A12.5 12.5 0 0 1 9.5 8Z" fill="#8fd9b6"/><path d="M-7.5 -8H-5.5M-7.5 -4.5H-5.5M-7.5 -1H-5.5M-7.5 2.5H-5.5M-7.5 6H-5.5M-2 12V10M1.5 12V10M5 12V10M8.5 12V10" stroke="#333" stroke-width="0.9"/></g><g transform="translate(406 429.8)" ><g transform="translate(2.5 2.5) scale(0.92)"><path d="M-9 -4.5L-3 -9.5H9V4.5L3 9.5H-9Z" fill="none" stroke="#d8d8d8" stroke-width="1.2" stroke-linejoin="round"/><path d="M-9 -4.5H3V9.5M3 -4.5L9 -9.5" fill="none" stroke="#d8d8d8" stroke-width="1.2" stroke-linejoin="round"/></g><path d="M-12.5 -10H-5.5M-9 -13.5V-6.5" stroke="#8fd9b6" stroke-width="1.8" fill="none"/></g><path d="M422 441.5V445H418.5Z" fill="#9a9a9a"/><g transform="translate(406 468.1)" ><path d="M-9.5 -1.5H6.5V12H-9.5Z" fill="#1d1d1d" stroke="#e4e4e4" stroke-width="1.3"/><path d="M6.5 -1.5L10 -5.5V8L6.500 12" fill="none" stroke="#e4e4e4" stroke-width="1.3"/><path d="M-10 -2V-8L-6.500 -12H10.500V-6L6.500 -2Z" fill="#8fd9b6"/><path d="M-10 -8H6.500V-2M6.500 -8L10.500 -12" stroke="#5d9c80" stroke-width="0.8" fill="none"/></g><path d="M422 482.0V485.5H418.5Z" fill="#9a9a9a"/><g transform="translate(406 504.35)" ><path d="M-9.5 -6L-5 -10H10V6L5.5 10H-9.5Z" fill="#8fd9b6" stroke="#e4e4e4" stroke-width="1.1" stroke-linejoin="round"/><path d="M-9.5 -6H5.5V10M5.5 -6L10 -10" fill="none" stroke="#e4e4e4" stroke-width="1.1"/><rect x="-5" y="-1.5" width="6" height="6" fill="#2a2a2a"/><path d="M-9.5 -6L-5 -1.5M5.5 -6L1 -1.5M-9.5 10L-5 4.5M5.5 10L1 4.5" stroke="#2a2a2a" stroke-width="0.9"/></g><g transform="translate(406 539.1)" ><path d="M-9.5 0H6V10H-9.5Z" fill="none" stroke="#e4e4e4" stroke-width="1.2"/><path d="M6 0L10 -3.5V6.5L6 10" fill="none" stroke="#e4e4e4" stroke-width="1.2"/><path d="M-9.5 -0.6V-3.5L-4.5 -9.5H7.5L10 -6.5V-4.2L6 -0.6Z" fill="#8fd9b6"/></g><g transform="translate(406 573.85)" ><path d="M-9 -4.5L-3 -9.5H9V4.5L3 9.5H-9Z" fill="none" stroke="#e4e4e4" stroke-width="1.2" stroke-linejoin="round"/><path d="M-9 -4.5H3V9.5M3 -4.5L9 -9.5" fill="none" stroke="#e4e4e4" stroke-width="1.2" stroke-linejoin="round"/><path d="M-3.5 -4.5V9.5M-3.5 -4.5L2.5 -9.5M-1.5 -4.5V9.5M-1.5 -4.5L4.5 -9.5" stroke="#8fd9b6" stroke-width="1" fill="none"/></g><path d="M422 586.25V589.75H418.5Z" fill="#9a9a9a"/><g transform="translate(406 608.6)" ><path d="M-9 -4.5L-3 -9.5H9V4.5L3 9.5H-9Z" fill="none" stroke="#e4e4e4" stroke-width="1.2" stroke-linejoin="round"/><path d="M-9 -4.5H3V9.5M3 -4.5L9 -9.5" fill="none" stroke="#e4e4e4" stroke-width="1.2" stroke-linejoin="round"/><path d="M-6 -2L2 -9L-1 11" stroke="#8fd9b6" stroke-width="1.1" fill="none"/><circle cx="-6" cy="-2" r="1.3" fill="#8fd9b6"/><circle cx="2" cy="-9.3" r="1.3" fill="#8fd9b6"/><circle cx="-1" cy="10.5" r="1.3" fill="#8fd9b6"/></g><path d="M422 621.0V624.5H418.5Z" fill="#9a9a9a"/><g transform="translate(406 643.35)" ><path d="M-8.5 9.5L-7.5 -5L2 -11L9 -3.5V9.5Z" fill="#8fd9b6"/><circle cx="-8.5" cy="9.5" r="1.7" fill="#e4e4e4"/><circle cx="-7.5" cy="-5" r="1.7" fill="#e4e4e4"/><circle cx="2" cy="-11" r="1.7" fill="#e4e4e4"/><circle cx="9" cy="-3.5" r="1.7" fill="#e4e4e4"/><circle cx="9" cy="9.5" r="1.7" fill="#e4e4e4"/></g><g transform="translate(406 678.1)" ><path d="M0 0L6.5 -9.8A11.8 11.8 0 1 0 11.6 -2.2Z" fill="#8fd9b6"/><path d="M1.5 -2.5L8.5 -12.5A12 12 0 0 1 13.5 -5.5Z" fill="#8fd9b6"/><path d="M0 0L-11.8 0M0 0L-8.3 8.3M0 0L0 11.8M0 0L8.3 8.3M0 0L-8.3 -8.3M0 0L0 -11.8" stroke="#2a2a2a" stroke-width="0.9"/></g><g transform="translate(406 712.85)" ><g transform="scale(0.86)"><path d="M-10 0C-10 -9 -6 -10.5 0 -10.5C6 -10.5 10 -9 10 0C10 8 6 10.5 0 10.5C-6 10.5 -10 8 -10 0Z" fill="#d6c1e8"/><path d="M-10 0.5C-4 -1 4 -1 10 0.5M0 -10.5C1.5 -4 1.5 4 0 10.5" stroke="#2a2a2a" stroke-width="1" fill="none"/></g></g><path d="M422 725.25V728.75H418.5Z" fill="#9a9a9a"/><g transform="translate(406 747.6)" ><g transform="translate(1.5 1.5) scale(0.95)"><path d="M-9 -4.5L-3 -9.5H9V4.5L3 9.5H-9Z" fill="none" stroke="#e4e4e4" stroke-width="1.2" stroke-linejoin="round"/><path d="M-9 -4.5H3V9.5M3 -4.5L9 -9.5" fill="none" stroke="#e4e4e4" stroke-width="1.2" stroke-linejoin="round"/><path d="M-4 -4.5V9.5M-4 -4.5L2 -9.5" stroke="#e4e4e4" stroke-width="1" fill="none"/></g><path d="M-11 -14V-9M-13.5 -11.5H-8.5" stroke="#e4e4e4" stroke-width="1.3"/></g><path d="M422 760.0V763.5H418.5Z" fill="#9a9a9a"/><g transform="translate(406 782.35)" ><path d="M12.0 0.0L8.0 3.0L8.0 -3.0ZM-12.0 0.0L-8.0 -3.0L-8.0 3.0ZM0.0 12.0L-3.0 8.0L3.0 8.0ZM0.0 -12.0L3.0 -8.0L-3.0 -8.0Z" fill="#e4e4e4"/><rect x="-5.5" y="-5.5" width="11" height="11" fill="#e4e4e4"/><path d="M-4 -4L4 4M4 -4L-4 4" stroke="#2a2a2a" stroke-width="1.6"/></g><path d="M422 794.75V798.25H418.5Z" fill="#9a9a9a"/><g transform="translate(406 817.1)" ><path d="M-14 -3.5L1.500 -8.500L14 5.500L-3.500 10Z" fill="#d6c1e8"/><path d="M14 5.500V9L-2.500 13.500L-3.500 10Z" fill="#a898b8"/><path d="M-14 -3.500L-3.500 10L-2.500 13.500L-14 -0.500Z" fill="#c3b0d6"/><path d="M7.500 -11H13M7.500 -11L10 -13M7.500 -11L10 -9" stroke="#e4e4e4" stroke-width="1.1" fill="none"/></g><path d="M422 829.5V833.0H418.5Z" fill="#9a9a9a"/><g transform="translate(406 851.85)" ><g transform="translate(2 3)"><path d="M-9 -4.5L-3 -9.5H9V4.5L3 9.5H-9Z" fill="none" stroke="#e4e4e4" stroke-width="1.2" stroke-linejoin="round"/><path d="M-9 -4.5H3V9.5M3 -4.5L9 -9.5" fill="none" stroke="#e4e4e4" stroke-width="1.2" stroke-linejoin="round"/></g><path d="M-12 6L2 1" stroke="#e4e4e4" stroke-width="1.1"/></g><path d="M422 864.25V867.75H418.5Z" fill="#9a9a9a"/><path d="M1276 158.8L1275 129.5" stroke="#2c8fff" stroke-width="2"/><path d="M1276 158.8L1301 151" stroke="#7fb515" stroke-width="2"/><path d="M1276 158.8L1294.2 168.4" stroke="#ff3352" stroke-width="2"/><circle cx="1256.7" cy="148.7" r="6.6" fill="#6a3540" fill-opacity="0.6" stroke="#d03a52" stroke-width="1.3"/><circle cx="1249.8" cy="167" r="7.6" fill="#4f6a22" fill-opacity="0.85" stroke="#8cc81a" stroke-width="1.4"/><circle cx="1276" cy="188.5" r="6.8" fill="#2d4a70" fill-opacity="0.6" stroke="#2c7fe0" stroke-width="1.3"/><circle cx="1275" cy="129.5" r="8.3" fill="#2c8fff"/><circle cx="1301" cy="151" r="8.3" fill="#7fb515"/><circle cx="1294.2" cy="168.4" r="8.3" fill="#ff3352"/><g font-family="Liberation Sans,sans-serif" font-size="11.5" fill="#0a0a0a" text-anchor="middle"><text x="1275" y="133.5">Z</text><text x="1301" y="155">Y</text><text x="1294.2" y="172.4">X</text></g><circle cx="1305.500" cy="212" r="6" fill="#f0f0f0"/><path d="M1301.300 216.500L1296.500 221.500" stroke="#f0f0f0" stroke-width="2.200" stroke-linecap="round"/><path d="M1302.300 212H1308.700M1305.500 208.800V215.200" stroke="#2a2a2a" stroke-width="1.300"/><g transform="translate(1303.5 244)"><path d="M-6.5 0.5C-7.5 -2 -5.5 -3 -4.5 -1.5L-3.5 0.5V-6C-3.5 -8 -1 -8 -1 -6V-7.5C-1 -9.5 1.5 -9.5 1.5 -7.5V-6.5C1.8 -8.5 4 -8.3 4 -6.3V-4C4.5 -5.5 6.5 -5.3 6.3 -3.3C6.2 0.5 6.3 3.5 4.8 6C4.5 7.5 4.5 8 4.5 8H-2.5C-3 5.5 -5.5 3.5 -6.5 0.5Z" fill="#f0f0f0"/><path d="M-1 -5.5V-1M1.5 -6V-1M4 -4.5V-0.5" stroke="#555" stroke-width="0.8"/></g><g transform="translate(1303.5 274.5)" fill="none" stroke="#f0f0f0" stroke-width="1.3"><circle cx="-3.5" cy="-4.5" r="2.6"/><circle cx="2.8" cy="-4.8" r="3"/><rect x="-6.5" y="-0.5" width="9.5" height="6.5" rx="1"/><path d="M3.5 1.5L7.5 -0.5V6.5L3.5 4.5"/></g><g transform="translate(1303.5 304.5)" fill="none" stroke="#f0f0f0" stroke-width="1.2"><path d="M-4.5 -6.5H4.5L7.5 6.5H-7.5ZM-5.8 -2H5.8M-6.7 2H6.7M-1.5 -6.5L-2.5 6.5M1.5 -6.5L2.5 6.5"/></g><path d="M1323.5 126.5L1320.5 130L1323.5 133.5" fill="none" stroke="#c0c0c0" stroke-width="1.2"/><g transform="translate(0 -0.8)"><path d="M392.700 70.200H398.800M391.800 74.300H406M396.600 67.800L394.300 77.600M402.400 72L403.600 77.600" fill="none" stroke="#e4e4e4" stroke-width="1.100" stroke-linecap="round"/><circle cx="402.700" cy="67.200" r="3.600" fill="#ececec"/><path d="M400.600 66.300A2.300 2.300 0 0 1 402.600 64.700" fill="none" stroke="#555" stroke-width="0.700"/><path d="M409.3 69.9L412.5 73.1L415.7 69.9" fill="none" stroke="#d0d0d0" stroke-width="1.3" stroke-linecap="round" stroke-linejoin="round"/><g fill="none" stroke="#d8d8d8" stroke-width="1"><path d="M431.0 68.8V74.6M432.8 76.3H439.3M441.1 74.6V70.3M432.8 67.0H436.3"/><rect x="429.5" y="65.5" width="3" height="3"/><rect x="429.5" y="74.8" width="3" height="3"/><rect x="439.6" y="74.8" width="3" height="3"/></g><rect x="437.6" y="63.5" width="5.300" height="5.300" fill="#f2f2f2"/><path d="M501.3 69.9L504.5 73.1L507.7 69.9" fill="none" stroke="#d0d0d0" stroke-width="1.3" stroke-linecap="round" stroke-linejoin="round"/><path d="M526 66H535.5V74L532.5 77H523V69" class="ic" style="stroke-width:1.1"/><rect x="521.5" y="66.5" width="4" height="4" fill="#f0f0f0"/><path d="M542.5 78V68.5A3 3 0 0 1 545.5 65.5H551.5A3 3 0 0 1 554 68.5V75" class="ic" style="stroke:#dfe8f5;stroke-width:1.1"/><rect x="546.5" y="67.500" width="3.5" height="10.5" fill="#fff"/><path d="M563 65.5H572.5V74.500L570.5 76.500" class="ic" style="stroke-width:1.1"/><rect x="560.5" y="68" width="9.5" height="9.5" fill="#ececec"/><path d="M874.5 64.5V76.500H886M872.5 67L874.5 64.5L876.5 67M883.5 74.500L886 76.500L883.5 78.500M876 75L883 68" class="ic" style="stroke-width:1.1"/><path d="M917.8 69.9L921 73.1L924.2 69.9" fill="none" stroke="#d0d0d0" stroke-width="1.3" stroke-linecap="round" stroke-linejoin="round"/><circle cx="941.5" cy="73.5" r="3.6" class="ic" style="stroke-width:1.1"/><circle cx="946.5" cy="68.5" r="3.6" class="ic" style="stroke-width:1.1"/><path d="M954.3 69.9L957.5 73.1L960.7 69.9" fill="none" stroke="#d0d0d0" stroke-width="1.3" stroke-linecap="round" stroke-linejoin="round"/><path d="M976.5 70.5A4.6 4.6 0 1 1 984 74.5L981.5 72A1.8 1.8 0 1 0 978.800 70.500Z" fill="#fff"/><path d="M975.500 73V77.500H980" fill="none" stroke="#fff" stroke-width="1.1" stroke-dasharray="1.6 1.2"/><path d="M994.500 70.500V75.500M998.500 70.500V75.500M1002.500 70.500V75.500M1006.500 70.500V75.500M994.500 73H1006.500" class="ic" style="stroke-width:1"/><rect x="1004" y="64.500" width="3.500" height="3.500" fill="#f0f0f0"/><path d="M1011.8 69.9L1015 73.1L1018.2 69.9" fill="none" stroke="#d0d0d0" stroke-width="1.3" stroke-linecap="round" stroke-linejoin="round"/><circle cx="1037" cy="71" r="6" fill="none" stroke="#fff" stroke-width="1.2"/><circle cx="1037" cy="71" r="3" fill="none" stroke="#fff" stroke-width="1.6"/><path d="M1051 77.500C1056 77.500 1055 65 1058 65C1061 65 1060 77.500 1065 77.500" class="ic" style="stroke-width:1.1"/><path d="M1068.8 69.9L1072 73.1L1075.2 69.9" fill="none" stroke="#d0d0d0" stroke-width="1.3" stroke-linecap="round" stroke-linejoin="round"/><path d="M1103 67C1106 63 1112 63 1115 67C1112 71 1106 71 1103 67Z" class="ic" style="stroke-width:1.1"/><circle cx="1109" cy="67" r="1.8" fill="#f0f0f0"/><path d="M1099 69L1106.500 73L1102.500 74L1101 78Z" fill="#f0f0f0"/><path d="M1116.8 69.9L1120 73.1L1123.2 69.9" fill="none" stroke="#d0d0d0" stroke-width="1.3" stroke-linecap="round" stroke-linejoin="round"/><path d="M1138.500 76.500C1140 70 1144 67 1148.500 66.500M1145 64.500L1149 66.500L1146.500 69.500M1138.500 67L1147 75.500" fill="none" stroke="#fff" stroke-width="1.1"/><circle cx="1138.500" cy="77" r="1.600" fill="#4772b3" stroke="#fff" stroke-width="1"/><circle cx="1148" cy="76.500" r="1.300" fill="#fff"/><path d="M1158.3 69.9L1161.5 73.1L1164.7 69.9" fill="none" stroke="#d0d0d0" stroke-width="1.3" stroke-linecap="round" stroke-linejoin="round"/><circle cx="1186" cy="72.500" r="5" fill="none" stroke="#fff" stroke-width="1.2"/><circle cx="1189.500" cy="69.500" r="4.500" fill="#fff"/><path d="M1203.3 69.9L1206.5 73.1L1209.7 69.9" fill="none" stroke="#d0d0d0" stroke-width="1.3" stroke-linecap="round" stroke-linejoin="round"/><g fill="none" stroke="#d8d8d8" stroke-width="1"><path d="M1222.7 68.8V74.6M1224.5 76.3H1231M1232.8 74.6V70.3M1224.5 67.0H1228"/><rect x="1221.2" y="65.5" width="3" height="3"/><rect x="1221.2" y="74.8" width="3" height="3"/><rect x="1231.3" y="74.8" width="3" height="3"/></g><rect x="1229.3" y="63.5" width="5.300" height="5.300" fill="#f2f2f2"/><path d="M1239.3 69.9L1242.5 73.1L1245.7 69.9" fill="none" stroke="#d0d0d0" stroke-width="1.3" stroke-linecap="round" stroke-linejoin="round"/><rect x="1258" y="67" width="9.500" height="9.500" fill="none" stroke="#fff" stroke-width="1.1"/><path d="M1261 67V64.500H1270.500V74H1267.500" fill="none" stroke="#fff" stroke-width="1.1"/><circle cx="1261" cy="71" r="0.8" fill="#fff"/><circle cx="1264.500" cy="71" r="0.8" fill="#fff"/><circle cx="1289.500" cy="71" r="6.500" fill="none" stroke="#fff" stroke-width="1.1"/><ellipse cx="1289.500" cy="71" rx="3" ry="6.500" fill="none" stroke="#fff" stroke-width="1"/><path d="M1283 71H1296" stroke="#fff" stroke-width="1"/><circle cx="1308" cy="71" r="6.800" fill="#cfcfcf"/><circle cx="1327" cy="71" r="6.800" fill="#cfcfcf"/><path d="M1320.500 70A6.500 6.500 0 0 0 1333 72C1328 76 1323 74 1320.500 70Z" fill="#555"/></g><rect x="391" y="89.5" width="13" height="13" fill="none" stroke="#fff" stroke-width="1.3" stroke-dasharray="2.4 1.5"/><path d="M416 89.500H424.500V97.500H420V102.500H410V94.500H416Z" fill="#d4d4d4"/><path d="M434.500 89.500H443V97.500H437V94.500H434.500Z" fill="#d4d4d4"/><rect x="429.500" y="94.500" width="7.500" height="8" fill="none" stroke="#d0d0d0" stroke-width="1.1" stroke-dasharray="2 1.3"/><path d="M447.500 89.500H455.500V93.500H459.500V102.500H451.500V98.500H447.500Z" fill="#d4d4d4"/><rect x="451.500" y="93.500" width="4" height="5" fill="#545454"/><rect x="466" y="89.500" width="12.500" height="13" fill="none" stroke="#d0d0d0" stroke-width="1.1" stroke-dasharray="2 1.3"/><rect x="469.500" y="93.500" width="5.500" height="5.500" fill="#d4d4d4"/><path d="M1179.500 89.500V103" stroke="#d0d0d0" stroke-width="1" stroke-dasharray="1.5 1.5"/><path d="M1177.500 92C1175 89 1172.500 90 1173 93C1174.500 95.500 1174.500 97 1173 99.500C1172.500 102.500 1175 103.500 1177.500 100.500M1181.500 92C1184 89 1186.500 90 1186 93C1184.500 95.500 1184.500 97 1186 99.500C1186.500 102.500 1184 103.500 1181.500 100.500" class="ic" style="stroke-width:1;stroke:#c8c8c8"/><path d="M1254.500 98.500C1256 94 1259 92 1262.500 91.500" fill="none" stroke="#8a8a8a" stroke-width="1" stroke-dasharray="1.5 1.2"/><rect x="1252" y="98.500" width="3.500" height="3.500" fill="none" stroke="#8a8a8a" stroke-width="1"/><rect x="1261.500" y="89.500" width="3.500" height="3.500" fill="none" stroke="#8a8a8a" stroke-width="1"/><path d="M1309.3 94.9L1312.5 98.1L1315.7 94.9" fill="none" stroke="#d0d0d0" stroke-width="1.3" stroke-linecap="round" stroke-linejoin="round"/></svg></div></div>
<div id="outl" class="area"><div class="abs" style="left:-1330px;top:-58px;width:1535px;height:874px"><div class="abs" style="left:1330px;top:58px;width:205px;height:25px;background:#303030"></div><div class="b dk" style="left:1337px;width:31px"></div><div class="b dk" style="left:1374px;width:32px"></div><div class="b dk" style="left:1422px;width:120px;background:#1d1d1d"></div><div class="t" style="left:1448px;top:63px;color:#6e6e6e">搜索</div><div class="abs" style="left:1330px;top:144px;width:205px;height:20px;background:#314b80"></div><div class="abs" style="left:1358px;top:127px;width:1px;height:52px;background:#555"></div><div class="abs" style="left:1369.500px;top:105px;width:19px;height:19px;border-radius:4px;background:#4a4a4a;box-shadow:inset 0 0 0 1px #6a6a6a"></div><div class="abs" style="left:1389.500px;top:145px;width:19.500px;height:19px;border-radius:4px;background:#5a6f95;box-shadow:inset 0 0 0 1px #7f96bf"></div><div class="t" style="left:1373px;top:86.500px">场景集合</div><div class="t" style="left:1393px;top:107px;letter-spacing:0.5px">Collection</div><div class="t" style="left:1413px;top:127px;letter-spacing:0.3px">Camera</div><div class="t" style="left:1413px;top:147px;color:#ffb340;letter-spacing:0.3px">Cube</div><div class="t" style="left:1413px;top:167px;letter-spacing:0.55px">Light</div><div class="abs" style="left:1340px;top:191px;width:160px;height:3px;border-radius:2px;background:#353535"></div><svg style="left:0;top:0" width="1535" height="874" viewBox="0 0 1535 874"><path d="M1343.500 65.500H1348M1345.500 65.500V76.500H1348.500M1345.500 71H1348.500" class="ic" style="stroke-width:1.100"/><rect x="1349" y="64" width="3" height="3" fill="#e0e0e0"/><rect x="1350" y="69.500" width="6.500" height="3" fill="#e0e0e0"/><rect x="1350" y="75" width="6.500" height="3" fill="#e0e0e0"/><path d="M1359.3 69.9L1362.5 73.1L1365.7 69.9" fill="none" stroke="#d0d0d0" stroke-width="1.3" stroke-linecap="round" stroke-linejoin="round"/><g transform="translate(1388 71)"><path d="M-7 -3.500V6.500H4M-5 -5.500V4.500H6" fill="none" stroke="#e0e0e0" stroke-width="1"/><rect x="-3" y="-7" width="10" height="9.500" fill="#e0e0e0"/><path d="M-2 1L1 -2.500L3 -0.500L4.500 -2L6 0V1.500H-2Z" fill="#222"/><circle cx="4.300" cy="-4.500" r="1" fill="#222"/></g><path d="M1396.8 69.9L1400 73.1L1403.2 69.9" fill="none" stroke="#d0d0d0" stroke-width="1.3" stroke-linecap="round" stroke-linejoin="round"/><circle cx="1434.5" cy="70.0" r="4.300" fill="none" stroke="#d0d0d0" stroke-width="1.300"/><path d="M1431.5 73.0L1427.5 77.0" stroke="#d0d0d0" stroke-width="1.600" stroke-linecap="round"/><rect x="1351.5" y="88.0" width="14" height="3.500" fill="#e6e6e6"/><path d="M1352.5 92.5H1364.5V101.0H1352.5Z" fill="#e6e6e6"/><rect x="1356.0" y="94.5" width="5" height="1.600" fill="#282828"/><path d="M1355.3 113.4L1358.5 116.6L1361.7 113.4" fill="none" stroke="#d0d0d0" stroke-width="1.3" stroke-linecap="round" stroke-linejoin="round"/><rect x="1372" y="108.0" width="14" height="3.500" fill="#e6e6e6"/><path d="M1373 112.5H1385V121.0H1373Z" fill="#e6e6e6"/><rect x="1376.5" y="114.5" width="5" height="1.600" fill="#282828"/><rect x="1470.500" y="109.500" width="10.500" height="10.500" rx="1.500" fill="#f0f0f0"/><path d="M1472.500 114.500L1475 117.500L1479.500 111.500" fill="none" stroke="#222" stroke-width="1.600"/><path d="M1487.5 114.0C1490.5 108.2 1498.5 108.2 1501.5 114.0C1498.5 119.8 1490.5 119.8 1487.5 114.0Z" fill="#e6e6e6"/><circle cx="1494.5" cy="114.0" r="3.100" fill="none" stroke="#2a2a2a" stroke-width="1.500"/><path d="M1508.0 110.0H1511.5L1512.5 108.0H1516.5L1517.5 110.0H1521.0V119.5H1508.0Z" fill="#e6e6e6"/><circle cx="1514.5" cy="114.5" r="3.300" fill="#282828"/><circle cx="1514.5" cy="114.5" r="1.800" fill="#e6e6e6"/><path d="M1487.5 134.0C1490.5 128.2 1498.5 128.2 1501.5 134.0C1498.5 139.8 1490.5 139.8 1487.5 134.0Z" fill="#e6e6e6"/><circle cx="1494.5" cy="134.0" r="3.100" fill="none" stroke="#2a2a2a" stroke-width="1.500"/><path d="M1508.0 130.0H1511.5L1512.5 128.0H1516.5L1517.5 130.0H1521.0V139.5H1508.0Z" fill="#e6e6e6"/><circle cx="1514.5" cy="134.5" r="3.300" fill="#282828"/><circle cx="1514.5" cy="134.5" r="1.800" fill="#e6e6e6"/><path d="M1487.5 154.0C1490.5 148.2 1498.5 148.2 1501.5 154.0C1498.5 159.8 1490.5 159.8 1487.5 154.0Z" fill="#e6e6e6"/><circle cx="1494.5" cy="154.0" r="3.100" fill="none" stroke="#2a2a2a" stroke-width="1.500"/><path d="M1508.0 150.0H1511.5L1512.5 148.0H1516.5L1517.5 150.0H1521.0V159.5H1508.0Z" fill="#e6e6e6"/><circle cx="1514.5" cy="154.5" r="3.300" fill="#282828"/><circle cx="1514.5" cy="154.5" r="1.800" fill="#e6e6e6"/><path d="M1487.5 174.0C1490.5 168.2 1498.5 168.2 1501.5 174.0C1498.5 179.8 1490.5 179.8 1487.5 174.0Z" fill="#e6e6e6"/><circle cx="1494.5" cy="174.0" r="3.100" fill="none" stroke="#2a2a2a" stroke-width="1.500"/><path d="M1508.0 170.0H1511.5L1512.5 168.0H1516.5L1517.5 170.0H1521.0V179.5H1508.0Z" fill="#e6e6e6"/><circle cx="1514.5" cy="174.5" r="3.300" fill="#282828"/><circle cx="1514.5" cy="174.5" r="1.800" fill="#e6e6e6"/><path d="M1377.7 131.5L1381.3 135L1377.7 138.5" fill="none" stroke="#c8c8c8" stroke-width="1.300" stroke-linecap="round" stroke-linejoin="round"/><path d="M1377.7 151.5L1381.3 155L1377.7 158.5" fill="none" stroke="#c8c8c8" stroke-width="1.300" stroke-linecap="round" stroke-linejoin="round"/><path d="M1377.7 171.5L1381.3 175L1377.7 178.5" fill="none" stroke="#c8c8c8" stroke-width="1.300" stroke-linecap="round" stroke-linejoin="round"/><g fill="#e8883a"><circle cx="1395" cy="130.500" r="2.800"/><circle cx="1401.500" cy="130" r="3.300"/><rect x="1392" y="133" width="11" height="7" rx="1"/><path d="M1403 135.500L1406.500 133.500V139.500L1403 137.500Z"/></g><path d="M1393.500 149.500H1405.500L1399.500 160.500Z" fill="none" stroke="#f09a45" stroke-width="2" stroke-linejoin="round"/><g fill="none" stroke="#e8883a" stroke-width="1.300"><path d="M1395.500 177.500C1392 174.500 1393 168.500 1399 168.500C1405 168.500 1406 174.500 1402.500 177.500Z" fill="#e8883a"/><path d="M1396.500 179.500H1401.500M1397.500 181.500H1400.500"/></g><path d="M1396.500 173.500L1399 175.500L1401.500 173.500" stroke="#282828" stroke-width="1" fill="none"/><path d="M1334.800 151V158M1337 160H1342.500M1344.700 158V153.500" fill="none" stroke="#dfe8f5" stroke-width="0.900"/><rect x="1333.300" y="148.300" width="2.800" height="2.800" fill="none" stroke="#dfe8f5" stroke-width="0.900"/><rect x="1333.300" y="158.500" width="2.800" height="2.800" fill="none" stroke="#dfe8f5" stroke-width="0.900"/><rect x="1343.200" y="158.500" width="2.800" height="2.800" fill="none" stroke="#dfe8f5" stroke-width="0.900"/><rect x="1341" y="147" width="5" height="5" fill="#fff"/><path d="M1463.500 146.500C1461.500 149 1461.500 160 1463.500 162.500" fill="none" stroke="#6d8bc0" stroke-width="1"/><path d="M1463.500 172V176.500" stroke="#3fae7a" stroke-width="1.200"/></svg></div></div><div id="prop" class="area"><div class="abs" style="left:-1330px;top:-199px;width:1535px;height:874px"><div class="abs" style="left:1330px;top:224px;width:27px;height:640px;background:#1e1e1e"></div><div class="abs" style="left:1330px;top:593px;width:27px;height:28px;background:#303030;border-radius:4px 0 0 4px"></div><div class="b dk" style="left:1340px;top:203px;width:28px"></div><div class="b dk" style="left:1392.500px;top:203px;width:116px;background:#1d1d1d"></div><div class="b dk" style="left:1528px;top:203px;width:12px"></div><div class="t" style="left:1418px;top:204px;color:#6e6e6e">搜索</div><div class="t" style="left:1390px;top:235px;letter-spacing:0.3px">Cube</div><div class="t" style="left:1464px;top:235px;letter-spacing:0.3px">Cube</div><div class="abs" style="left:1366px;top:270px;width:159.500px;height:18px;border-radius:3px;background:#1f1f1f;box-shadow:inset 0 0 0 1px #3a3a3a"></div><div class="abs" style="left:1366px;top:270px;width:29.500px;height:18px;border-radius:3px 0 0 3px;background:#2b2b2b;box-shadow:inset 0 0 0 1px #3a3a3a"></div><div class="abs" style="left:1506px;top:270px;width:19.500px;height:18px;border-radius:0 3px 3px 0;background:#545454"></div><div class="t" style="left:1403px;top:271px;letter-spacing:0.3px">Cube</div><div class="abs" style="left:1364.500px;top:299.5px;width:162px;height:120.5px;border-radius:4px;background:#3a3a3a"></div><div class="t" style="left:1386px;top:304.0px">顶点组</div><div class="abs" style="left:1364.500px;top:422.5px;width:162px;height:145px;border-radius:4px;background:#3a3a3a"></div><div class="t" style="left:1386px;top:427.0px">形态键</div><div class="abs" style="left:1364.500px;top:570.5px;width:162px;height:24.5px;border-radius:4px;background:#3a3a3a"></div><div class="t" style="left:1386px;top:575.0px">UV 贴图</div><div class="abs" style="left:1364.500px;top:597.5px;width:162px;height:24.5px;border-radius:4px;background:#3a3a3a"></div><div class="t" style="left:1386px;top:602.0px">颜色属性</div><div class="abs" style="left:1364.500px;top:624.5px;width:162px;height:24.5px;border-radius:4px;background:#3a3a3a"></div><div class="t" style="left:1386px;top:629.0px">属性</div><div class="abs" style="left:1364.500px;top:651.5px;width:162px;height:24.5px;border-radius:4px;background:#3a3a3a"></div><div class="t" style="left:1386px;top:656.0px">纹理空间</div><div class="abs" style="left:1364.500px;top:678.5px;width:162px;height:24.5px;border-radius:4px;background:#3a3a3a"></div><div class="t" style="left:1386px;top:683.0px">重构网格</div><div class="abs" style="left:1364.500px;top:705.5px;width:162px;height:24.5px;border-radius:4px;background:#3a3a3a"></div><div class="t" style="left:1386px;top:710.0px">几何数据</div><div class="abs" style="left:1364.500px;top:732.5px;width:162px;height:24.5px;border-radius:4px;background:#3a3a3a"></div><div class="t" style="left:1386px;top:737.0px">自定义属性</div><div class="abs" style="left:1373px;top:333px;width:117px;height:77px;border-radius:3px;background:#2b2b2b;box-shadow:inset 0 0 0 1px #343434"></div><div class="abs" style="left:1373px;top:456px;width:117px;height:77px;border-radius:3px;background:#2b2b2b;box-shadow:inset 0 0 0 1px #343434"></div><div class="abs" style="left:1500px;top:333px;width:18px;height:38px;border-radius:3px;background:#545454"></div><div class="abs" style="left:1500px;top:351.500px;width:18px;height:1px;background:#444"></div><div class="abs" style="left:1500px;top:379px;width:18px;height:18.500px;border-radius:3px;background:#222;box-shadow:inset 0 0 0 1px #3a3a3a"></div><div class="abs" style="left:1500px;top:456px;width:18px;height:38px;border-radius:3px;background:#464646"></div><div class="abs" style="left:1500px;top:474.500px;width:18px;height:1px;background:#3a3a3a"></div><div class="abs" style="left:1500px;top:502px;width:18px;height:18.500px;border-radius:3px;background:#222;box-shadow:inset 0 0 0 1px #3a3a3a"></div><div class="abs" style="left:1373px;top:543.500px;width:12.500px;height:12.500px;border-radius:2.500px;background:#545454"></div><div class="t" style="left:1389.500px;top:541.500px">添加静置位置</div><svg style="left:0;top:0" width="1535" height="874" viewBox="0 0 1535 874"><rect x="1343" y="205.500" width="13" height="5.500" rx="2.700" fill="#e0e0e0"/><rect x="1343" y="213" width="13" height="5.500" rx="2.700" fill="#e0e0e0"/><circle cx="1346" cy="208.200" r="1.700" fill="#1f1f1f"/><circle cx="1353" cy="215.700" r="1.700" fill="#1f1f1f"/><path d="M1358.8 210.9L1362 214.1L1365.2 210.9" fill="none" stroke="#d0d0d0" stroke-width="1.3" stroke-linecap="round" stroke-linejoin="round"/><circle cx="1404.5" cy="211.0" r="4.300" fill="none" stroke="#d0d0d0" stroke-width="1.300"/><path d="M1401.5 214.0L1397.5 218.0" stroke="#d0d0d0" stroke-width="1.600" stroke-linecap="round"/><path d="M1367.500 240V237H1370.500M1378 237H1381V240M1367.500 246V249.500H1370.500M1378 249.500H1381V246" class="ic"/><rect x="1370.500" y="239.500" width="7.500" height="7.500" fill="#e6e6e6"/><path d="M1426.2 240.0L1429.8 243.5L1426.2 247.0" fill="none" stroke="#c8c8c8" stroke-width="1.300" stroke-linecap="round" stroke-linejoin="round"/><path d="M1443.5 239.0H1453.5L1448.5 248.5Z" fill="none" stroke="#e6e6e6" stroke-width="1.100"/><rect x="1441.9" y="237.4" width="3.200" height="3.200" fill="#2c2c2c" stroke="#e6e6e6" stroke-width="1"/><rect x="1451.9" y="237.4" width="3.200" height="3.200" fill="#2c2c2c" stroke="#e6e6e6" stroke-width="1"/><rect x="1446.9" y="246.9" width="3.200" height="3.200" fill="#2c2c2c" stroke="#e6e6e6" stroke-width="1"/><path d="M1511 250L1515.500 245.500M1513.500 240.500L1520.500 247.500M1514.500 241.500L1518 238L1523 243L1519.500 246.500" fill="none" stroke="#a0a0a0" stroke-width="1.100"/><path d="M1372 274.5H1382L1377 284Z" fill="none" stroke="#e6e6e6" stroke-width="1.100"/><rect x="1370.4" y="272.9" width="3.200" height="3.200" fill="#2c2c2c" stroke="#e6e6e6" stroke-width="1"/><rect x="1380.4" y="272.9" width="3.200" height="3.200" fill="#2c2c2c" stroke="#e6e6e6" stroke-width="1"/><rect x="1375.4" y="282.4" width="3.200" height="3.200" fill="#2c2c2c" stroke="#e6e6e6" stroke-width="1"/><path d="M1386.3 277.9L1389.5 281.1L1392.7 277.9" fill="none" stroke="#d0d0d0" stroke-width="1.3" stroke-linecap="round" stroke-linejoin="round"/><path d="M1515.500 272.500C1517.500 274 1519.500 274.500 1521.500 274.500C1521.500 280 1520 283.500 1515.500 286C1511 283.500 1509.500 280 1509.500 274.500C1511.500 274.500 1513.500 274 1515.500 272.500Z" fill="none" stroke="#c8c8c8" stroke-width="1.100"/><path d="M1373.3 310.9L1376.5 314.1L1379.7 310.9" fill="none" stroke="#d0d0d0" stroke-width="1.3" stroke-linecap="round" stroke-linejoin="round"/><path d="M1373.3 433.9L1376.5 437.1L1379.7 433.9" fill="none" stroke="#d0d0d0" stroke-width="1.3" stroke-linecap="round" stroke-linejoin="round"/><rect x="1510" y="310" width="1.200" height="1.200" fill="#808080"/><rect x="1510" y="313" width="1.200" height="1.200" fill="#808080"/><rect x="1513" y="310" width="1.200" height="1.200" fill="#808080"/><rect x="1513" y="313" width="1.200" height="1.200" fill="#808080"/><rect x="1516" y="310" width="1.200" height="1.200" fill="#808080"/><rect x="1516" y="313" width="1.200" height="1.200" fill="#808080"/><rect x="1519" y="310" width="1.200" height="1.200" fill="#808080"/><rect x="1519" y="313" width="1.200" height="1.200" fill="#808080"/><rect x="1510" y="433" width="1.200" height="1.200" fill="#808080"/><rect x="1510" y="436" width="1.200" height="1.200" fill="#808080"/><rect x="1513" y="433" width="1.200" height="1.200" fill="#808080"/><rect x="1513" y="436" width="1.200" height="1.200" fill="#808080"/><rect x="1516" y="433" width="1.200" height="1.200" fill="#808080"/><rect x="1516" y="436" width="1.200" height="1.200" fill="#808080"/><rect x="1519" y="433" width="1.200" height="1.200" fill="#808080"/><rect x="1519" y="436" width="1.200" height="1.200" fill="#808080"/><path d="M1375.2 579.5L1378.8 583L1375.2 586.5" fill="none" stroke="#c8c8c8" stroke-width="1.300" stroke-linecap="round" stroke-linejoin="round"/><rect x="1510" y="580.5" width="1.200" height="1.200" fill="#808080"/><rect x="1510" y="583.5" width="1.200" height="1.200" fill="#808080"/><rect x="1513" y="580.5" width="1.200" height="1.200" fill="#808080"/><rect x="1513" y="583.5" width="1.200" height="1.200" fill="#808080"/><rect x="1516" y="580.5" width="1.200" height="1.200" fill="#808080"/><rect x="1516" y="583.5" width="1.200" height="1.200" fill="#808080"/><rect x="1519" y="580.5" width="1.200" height="1.200" fill="#808080"/><rect x="1519" y="583.5" width="1.200" height="1.200" fill="#808080"/><path d="M1375.2 606.5L1378.8 610L1375.2 613.5" fill="none" stroke="#c8c8c8" stroke-width="1.300" stroke-linecap="round" stroke-linejoin="round"/><rect x="1510" y="607.5" width="1.200" height="1.200" fill="#808080"/><rect x="1510" y="610.5" width="1.200" height="1.200" fill="#808080"/><rect x="1513" y="607.5" width="1.200" height="1.200" fill="#808080"/><rect x="1513" y="610.5" width="1.200" height="1.200" fill="#808080"/><rect x="1516" y="607.5" width="1.200" height="1.200" fill="#808080"/><rect x="1516" y="610.5" width="1.200" height="1.200" fill="#808080"/><rect x="1519" y="607.5" width="1.200" height="1.200" fill="#808080"/><rect x="1519" y="610.5" width="1.200" height="1.200" fill="#808080"/><path d="M1375.2 633.5L1378.8 637L1375.2 640.5" fill="none" stroke="#c8c8c8" stroke-width="1.300" stroke-linecap="round" stroke-linejoin="round"/><rect x="1510" y="634.5" width="1.200" height="1.200" fill="#808080"/><rect x="1510" y="637.5" width="1.200" height="1.200" fill="#808080"/><rect x="1513" y="634.5" width="1.200" height="1.200" fill="#808080"/><rect x="1513" y="637.5" width="1.200" height="1.200" fill="#808080"/><rect x="1516" y="634.5" width="1.200" height="1.200" fill="#808080"/><rect x="1516" y="637.5" width="1.200" height="1.200" fill="#808080"/><rect x="1519" y="634.5" width="1.200" height="1.200" fill="#808080"/><rect x="1519" y="637.5" width="1.200" height="1.200" fill="#808080"/><path d="M1375.2 660.5L1378.8 664L1375.2 667.5" fill="none" stroke="#c8c8c8" stroke-width="1.300" stroke-linecap="round" stroke-linejoin="round"/><rect x="1510" y="661.5" width="1.200" height="1.200" fill="#808080"/><rect x="1510" y="664.5" width="1.200" height="1.200" fill="#808080"/><rect x="1513" y="661.5" width="1.200" height="1.200" fill="#808080"/><rect x="1513" y="664.5" width="1.200" height="1.200" fill="#808080"/><rect x="1516" y="661.5" width="1.200" height="1.200" fill="#808080"/><rect x="1516" y="664.5" width="1.200" height="1.200" fill="#808080"/><rect x="1519" y="661.5" width="1.200" height="1.200" fill="#808080"/><rect x="1519" y="664.5" width="1.200" height="1.200" fill="#808080"/><path d="M1375.2 687.5L1378.8 691L1375.2 694.5" fill="none" stroke="#c8c8c8" stroke-width="1.300" stroke-linecap="round" stroke-linejoin="round"/><rect x="1510" y="688.5" width="1.200" height="1.200" fill="#808080"/><rect x="1510" y="691.5" width="1.200" height="1.200" fill="#808080"/><rect x="1513" y="688.5" width="1.200" height="1.200" fill="#808080"/><rect x="1513" y="691.5" width="1.200" height="1.200" fill="#808080"/><rect x="1516" y="688.5" width="1.200" height="1.200" fill="#808080"/><rect x="1516" y="691.5" width="1.200" height="1.200" fill="#808080"/><rect x="1519" y="688.5" width="1.200" height="1.200" fill="#808080"/><rect x="1519" y="691.5" width="1.200" height="1.200" fill="#808080"/><path d="M1375.2 714.5L1378.8 718L1375.2 721.5" fill="none" stroke="#c8c8c8" stroke-width="1.300" stroke-linecap="round" stroke-linejoin="round"/><rect x="1510" y="715.5" width="1.200" height="1.200" fill="#808080"/><rect x="1510" y="718.5" width="1.200" height="1.200" fill="#808080"/><rect x="1513" y="715.5" width="1.200" height="1.200" fill="#808080"/><rect x="1513" y="718.5" width="1.200" height="1.200" fill="#808080"/><rect x="1516" y="715.5" width="1.200" height="1.200" fill="#808080"/><rect x="1516" y="718.5" width="1.200" height="1.200" fill="#808080"/><rect x="1519" y="715.5" width="1.200" height="1.200" fill="#808080"/><rect x="1519" y="718.5" width="1.200" height="1.200" fill="#808080"/><path d="M1375.2 741.5L1378.8 745L1375.2 748.5" fill="none" stroke="#c8c8c8" stroke-width="1.300" stroke-linecap="round" stroke-linejoin="round"/><rect x="1510" y="742.5" width="1.200" height="1.200" fill="#808080"/><rect x="1510" y="745.5" width="1.200" height="1.200" fill="#808080"/><rect x="1513" y="742.5" width="1.200" height="1.200" fill="#808080"/><rect x="1513" y="745.5" width="1.200" height="1.200" fill="#808080"/><rect x="1516" y="742.5" width="1.200" height="1.200" fill="#808080"/><rect x="1516" y="745.5" width="1.200" height="1.200" fill="#808080"/><rect x="1519" y="742.5" width="1.200" height="1.200" fill="#808080"/><rect x="1519" y="745.5" width="1.200" height="1.200" fill="#808080"/><path d="M1384 398L1389 401L1384 404Z" fill="#c8c8c8"/><rect x="1436" y="399.5" width="1.200" height="1.200" fill="#9a9a9a"/><rect x="1436" y="402.5" width="1.200" height="1.200" fill="#9a9a9a"/><rect x="1439" y="399.5" width="1.200" height="1.200" fill="#9a9a9a"/><rect x="1439" y="402.5" width="1.200" height="1.200" fill="#9a9a9a"/><rect x="1442" y="399.5" width="1.200" height="1.200" fill="#9a9a9a"/><rect x="1442" y="402.5" width="1.200" height="1.200" fill="#9a9a9a"/><rect x="1445" y="399.5" width="1.200" height="1.200" fill="#9a9a9a"/><rect x="1445" y="402.5" width="1.200" height="1.200" fill="#9a9a9a"/><path d="M1384 521.5L1389 524.5L1384 527.5Z" fill="#c8c8c8"/><rect x="1436" y="523.0" width="1.200" height="1.200" fill="#9a9a9a"/><rect x="1436" y="526.0" width="1.200" height="1.200" fill="#9a9a9a"/><rect x="1439" y="523.0" width="1.200" height="1.200" fill="#9a9a9a"/><rect x="1439" y="526.0" width="1.200" height="1.200" fill="#9a9a9a"/><rect x="1442" y="523.0" width="1.200" height="1.200" fill="#9a9a9a"/><rect x="1442" y="526.0" width="1.200" height="1.200" fill="#9a9a9a"/><rect x="1445" y="523.0" width="1.200" height="1.200" fill="#9a9a9a"/><rect x="1445" y="526.0" width="1.200" height="1.200" fill="#9a9a9a"/><path d="M1504 343H1514M1509 338V348" stroke="#f0f0f0" stroke-width="1.200"/><path d="M1504.500 361H1513.500" stroke="#777" stroke-width="1"/><path d="M1505.5 386.75L1509 390.25L1512.5 386.75" fill="none" stroke="#d0d0d0" stroke-width="1.3" stroke-linecap="round" stroke-linejoin="round"/><path d="M1504 466H1514M1509 461V471" stroke="#7a7a7a" stroke-width="1.200"/><path d="M1504.500 484H1513.500" stroke="#6a6a6a" stroke-width="1.200"/><path d="M1505.5 509.75L1509 513.25L1512.5 509.75" fill="none" stroke="#d0d0d0" stroke-width="1.3" stroke-linecap="round" stroke-linejoin="round"/><g opacity="0.8"><g transform="translate(1343 246)" fill="#e0e0e0"><path d="M-6 -6.500H-3V-1H-6ZM-5.500 0H-3.500V5.500H-5.500Z"/><rect x="-7" y="1.500" width="5" height="5" rx="1"/><path d="M1.500 -6.500C0 -4 1 -2 3 -1.500V6.500H5V-1.500C7 -2 8 -4 6.500 -6.500L6 -3.500H2Z"/></g><g transform="translate(1343 283)"><rect x="-7" y="-3.500" width="14" height="9.500" rx="1" fill="none" stroke="#e0e0e0" stroke-width="1.300"/><path d="M-4 -4V-6.500H1V-4" fill="none" stroke="#e0e0e0" stroke-width="1.200"/><rect x="-5" y="-1" width="6" height="5" fill="#e0e0e0"/><path d="M3 -1H5.500M3 1.500H5.500" stroke="#e0e0e0" stroke-width="1"/></g><g transform="translate(1343 311)" fill="#e0e0e0"><rect x="-7" y="-7" width="14" height="5"/><path d="M-5 -1H5V7H-5Z" fill="none" stroke="#e0e0e0" stroke-width="1.300"/><path d="M-3.500 5.500L-1 2L1 4L2.500 2.500L3.500 5.500Z"/></g><g transform="translate(1343 339.5)"><path d="M-7 -3.500V6.500H4M-5 -5.500V4.500H6" fill="none" stroke="#c8c8c8" stroke-width="1"/><rect x="-3" y="-7" width="10" height="9.500" fill="#c8c8c8"/><path d="M-2 1L1 -2.500L3 -0.500L4.500 -2L6 0V1.500H-2Z" fill="#222"/><circle cx="4.300" cy="-4.500" r="1" fill="#222"/></g><g transform="translate(1343 367)"><path d="M-3 -7.500C-1.500 -3 0.500 0 1.500 4.500H-7.500C-6.500 0 -4.500 -3 -3 -7.500Z" fill="#dcdcdc"/><circle cx="5" cy="-5" r="2.300" fill="#e0e0e0"/><circle cx="3.500" cy="3" r="3.300" fill="#1e1e1e" stroke="#e0e0e0" stroke-width="1.200"/></g><g transform="translate(1343 395)"><circle r="6.500" fill="none" stroke="#e0526a" stroke-width="1.400"/><path d="M-5.500 -3C-2 -4 -1 -1 -3 1C-4 3 -1 4 0 6.500M1 -6.500C0 -3 4 -2 6 -1.500" fill="none" stroke="#e0526a" stroke-width="1.400"/><path d="M-6 -1C-3 -2 -2 0 -3.500 2C-4 4 -2 5 -1 6C-4 5.500 -6 3 -6 -1Z" fill="#e0526a"/></g><g transform="translate(1343 432)"><rect x="-7" y="-6.500" width="14" height="3.500" fill="none" stroke="#e6e6e6" stroke-width="1.300"/><path d="M-6 -2.500H6V6.500H-6Z" fill="none" stroke="#e6e6e6" stroke-width="1.300"/><path d="M-2 0.500H2" stroke="#e6e6e6" stroke-width="1.300"/></g><g transform="translate(1343 467)"><path d="M-7 -4V-7H-4M4 -7H7V-4M-7 4V7H-4M4 7H7V4" fill="none" stroke="#e8883a" stroke-width="1.200"/><rect x="-4.200" y="-4.200" width="8.400" height="8.400" fill="#e8883a"/></g><g transform="translate(1343 495)"><path d="M-6.500 6.500L0 0" stroke="#5a8ee0" stroke-width="3" stroke-linecap="round"/><path d="M1 -6.500C-2 -5 -2 -1 0 0.500C2 2 6 1.500 6.500 -2L3.500 0L1.500 -2L3.500 -5.500Z" fill="#5a8ee0"/></g><g transform="translate(1343 523)" stroke="#5a8ee0" stroke-width="1.200" fill="#5a8ee0"><path d="M-4.500 5L-4.500 -5L5 -5.500M-4.500 -5L5 4.500" fill="none"/><circle cx="-4.500" cy="-5" r="1.800"/><circle cx="5" cy="-5.500" r="1.800"/><circle cx="5" cy="4.500" r="1.800"/><circle cx="-4.500" cy="5.500" r="1.800"/></g><g transform="translate(1343 551)"><path d="M4.500 -4.500A6.500 6.500 0 1 0 6.500 0" fill="none" stroke="#5a8ee0" stroke-width="1.400"/><circle r="2.300" fill="#5a8ee0"/><circle cx="5.500" cy="-5" r="1.600" fill="#5a8ee0"/></g><g transform="translate(1343 579)" fill="none" stroke="#5a8ee0" stroke-width="1.400"><path d="M-7 3.500C-8 0 -4 -2 -1 -3L5 -6.500C8 -7 8.500 -3 6 -1.500L0 3C-2 5 -6 6.500 -7 3.500Z"/><circle cx="-3.500" cy="2" r="1.500"/><circle cx="4.500" cy="-3.500" r="1.200"/></g></g><path d="M1337.5 602H1348.5L1343 612.5Z" fill="none" stroke="#27d690" stroke-width="1.300"/><rect x="1335.8" y="600.3" width="3.400" height="3.400" fill="#303030" stroke="#27d690" stroke-width="1.100"/><rect x="1346.8" y="600.3" width="3.400" height="3.400" fill="#303030" stroke="#27d690" stroke-width="1.100"/><rect x="1341.3" y="610.8" width="3.400" height="3.400" fill="#303030" stroke="#27d690" stroke-width="1.100"/><g opacity="0.8"><g transform="translate(1343 635)"><circle r="6.500" fill="none" stroke="#e0526a" stroke-width="1.400"/><path d="M0 0V-6.500A6.500 6.500 0 0 1 6.500 0ZM0 0V6.500A6.500 6.500 0 0 1 -6.500 0Z" fill="#e0526a"/></g><g transform="translate(1343 671)"><rect x="-6.50" y="-6.50" width="3.250" height="3.250" fill="#e0526a"/><rect x="-3.25" y="-6.50" width="3.250" height="3.250" fill="#7a3040"/><rect x="0.00" y="-6.50" width="3.250" height="3.250" fill="#e0526a"/><rect x="3.25" y="-6.50" width="3.250" height="3.250" fill="#7a3040"/><rect x="-6.50" y="-3.25" width="3.250" height="3.250" fill="#7a3040"/><rect x="-3.25" y="-3.25" width="3.250" height="3.250" fill="#e0526a"/><rect x="0.00" y="-3.25" width="3.250" height="3.250" fill="#7a3040"/><rect x="3.25" y="-3.25" width="3.250" height="3.250" fill="#e0526a"/><rect x="-6.50" y="0.00" width="3.250" height="3.250" fill="#e0526a"/><rect x="-3.25" y="0.00" width="3.250" height="3.250" fill="#7a3040"/><rect x="0.00" y="0.00" width="3.250" height="3.250" fill="#e0526a"/><rect x="3.25" y="0.00" width="3.250" height="3.250" fill="#7a3040"/><rect x="-6.50" y="3.25" width="3.250" height="3.250" fill="#7a3040"/><rect x="-3.25" y="3.25" width="3.250" height="3.250" fill="#e0526a"/><rect x="0.00" y="3.25" width="3.250" height="3.250" fill="#7a3040"/><rect x="3.25" y="3.25" width="3.250" height="3.250" fill="#e0526a"/></g></g></svg></div></div>
<div class="abs" style="left:767px;top:80.3px;width:197.500px;height:515.5px;background:#181818;border-radius:0 0 5px 5px;box-shadow:0 2px 6px rgba(0,0,0,0.45),inset 0 0 0 1px #222;z-index:20"><div class="mi" style="top:2.7px">挤出边线</div><div class="mi" style="top:22.7px">边线倒角</div><div class="sc" style="top:22.7px">Ctrl B</div><div class="mi" style="top:42.7px">桥接循环边</div><div class="mi" style="top:62.7px">螺旋</div><div class="sep" style="top:86.2px"></div><div class="mi" style="top:89.7px">细分</div><div class="mi" style="top:109.7px">细分并排边</div><div class="mi" style="top:129.7px">反细分</div><div class="sep" style="top:153.2px"></div><div class="mi" style="top:156.7px">顺时针旋转边</div><div class="mi" style="top:176.7px">逆时针旋转边</div><div class="sep" style="top:200.2px"></div><div class="mi" style="top:203.7px">滑移边线</div><div class="mi" style="top:223.7px">环切并滑移</div><div class="sc" style="top:223.7px">Ctrl R</div><div class="mi" style="top:243.7px">偏移边线并滑移</div><div class="sc" style="top:243.7px">Shift Ctrl R</div><div class="sep" style="top:267.2px"></div><div class="mi" style="top:270.7px">边线折痕</div><div class="sc" style="top:270.7px">Shift E</div><div class="mi" style="top:290.7px">倒角边权重</div><div class="sep" style="top:314.2px"></div><div class="abs" style="left:2px;top:316.7px;width:194px;height:22px;background:#484848;border:1.500px solid #c01c1c;border-radius:2px"></div><div class="mi" style="top:317.7px">标记缝合边</div><div class="mi" style="top:337.7px">清除缝合边</div><div class="sep" style="top:361.2px"></div><div class="mi" style="top:364.7px">标记锐边</div><div class="mi" style="top:384.7px">清除锐边</div><div class="mi" style="top:404.7px">为顶点标记锐边</div><div class="mi" style="top:424.7px">为顶点清除锐边</div><div class="mi" style="top:444.7px">按角度设置锐边</div><div class="sep" style="top:468.2px"></div><div class="mi" style="top:471.7px">标记 <span class="lt2"><u>F</u>reestyle</span> 边</div><div class="mi" style="top:491.7px">清除 <span class="lt2">F<u>r</u>eestyle</span> 边</div></div><div class="abs" style="left:870px;top:430px;width:193px;height:32px;background:#1b1b1b;border-radius:4px;box-shadow:0 1px 4px rgba(0,0,0,0.5);z-index:21"></div><div class="t" style="left:881px;top:437.500px;z-index:22;color:#e0e0e0">将所选边标记 / 取消标记为缝合边.</div><svg style="left:0;top:0;z-index:30" width="1535" height="874" viewBox="0 0 1535 874"><path d="M897.500 412.300V428.500L901.300 425L904 430.900L906.400 429.800L903.700 424H908.800Z" fill="#fff" stroke="#000" stroke-width="1" stroke-linejoin="round"/></svg>
</body>
</html>
